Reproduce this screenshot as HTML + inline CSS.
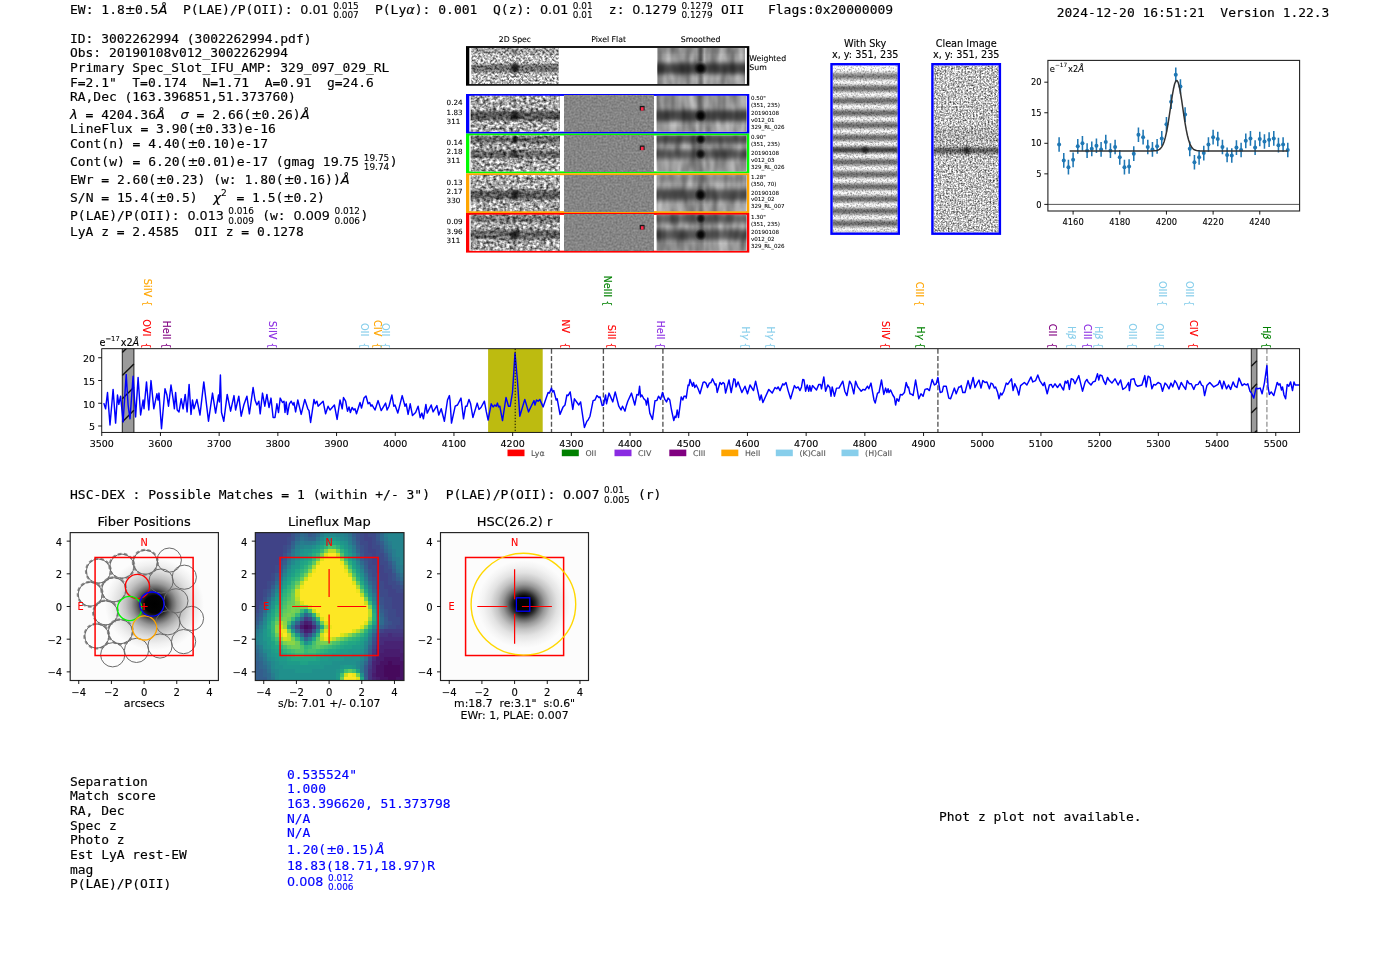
<!DOCTYPE html>
<html><head><meta charset="utf-8"><title>3002262994</title>
<style>
html,body{margin:0;padding:0;background:#fff;}
svg{display:block;will-change:transform;}
text{stroke-width:0.012em;}
.m{font-family:"DejaVu Sans Mono","Liberation Mono",monospace;}
.s{font-family:"DejaVu Sans","Liberation Sans",sans-serif;}
.i{font-family:"DejaVu Sans","Liberation Sans",sans-serif;font-style:italic;}
</style></head><body>
<svg width="1400" height="953" viewBox="0 0 1400 953">
<defs>
<filter id="n2d" x="0" y="0" width="100%" height="100%" color-interpolation-filters="sRGB">
<feTurbulence type="fractalNoise" baseFrequency="0.42 0.5" numOctaves="2" seed="7" result="t"/>
<feColorMatrix type="matrix" values="1.55 0 0 0 -0.04  1.55 0 0 0 -0.04  1.55 0 0 0 -0.04  0 0 0 0 1"/>
</filter>
<filter id="n2r" x="0" y="0" width="100%" height="100%" color-interpolation-filters="sRGB">
<feTurbulence type="fractalNoise" baseFrequency="0.3 0.36" numOctaves="2" seed="13"/>
<feColorMatrix type="matrix" values="1.5 0 0 0 -0.1  1.5 0 0 0 -0.1  1.5 0 0 0 -0.1  0 0 0 0 1"/>
</filter>
<filter id="nsm" x="0" y="0" width="100%" height="100%" color-interpolation-filters="sRGB">
<feTurbulence type="fractalNoise" baseFrequency="0.11 0.035" numOctaves="2" seed="11"/>
<feColorMatrix type="matrix" values="0.55 0 0 0 0.32  0.55 0 0 0 0.32  0.55 0 0 0 0.32  0 0 0 0 1"/>
</filter>
<filter id="nfl" x="0" y="0" width="100%" height="100%" color-interpolation-filters="sRGB">
<feTurbulence type="fractalNoise" baseFrequency="0.5" numOctaves="1" seed="5"/>
<feColorMatrix type="matrix" values="0.25 0 0 0 0.395  0.25 0 0 0 0.395  0.25 0 0 0 0.395  0 0 0 0 1"/>
</filter>
<filter id="b1" x="-20%" y="-20%" width="140%" height="140%"><feGaussianBlur stdDeviation="1.2"/></filter>
<filter id="b2" x="-30%" y="-30%" width="160%" height="160%"><feGaussianBlur stdDeviation="2"/></filter>
<radialGradient id="blob"><stop offset="0" stop-color="#000" stop-opacity="1"/><stop offset="0.4" stop-color="#000" stop-opacity="0.9"/><stop offset="0.7" stop-color="#000" stop-opacity="0.42"/><stop offset="1" stop-color="#000" stop-opacity="0"/></radialGradient>
<radialGradient id="blob2"><stop offset="0" stop-color="#000" stop-opacity="0.95"/><stop offset="0.45" stop-color="#000" stop-opacity="0.7"/><stop offset="1" stop-color="#000" stop-opacity="0"/></radialGradient>

<clipPath id="cc1"><rect x="471.40" y="47.90" width="87.20" height="36.20"/></clipPath>
<clipPath id="cc2"><rect x="657.40" y="47.90" width="87.60" height="36.20"/></clipPath>
<clipPath id="cc3"><rect x="470.70" y="95.80" width="89.30" height="36.00"/></clipPath>
<clipPath id="cc4"><rect x="656.60" y="95.80" width="89.90" height="36.00"/></clipPath>
<clipPath id="cc5"><rect x="470.70" y="135.40" width="89.30" height="36.10"/></clipPath>
<clipPath id="cc6"><rect x="656.60" y="135.40" width="89.90" height="36.10"/></clipPath>
<clipPath id="cc7"><rect x="470.70" y="175.10" width="89.30" height="36.10"/></clipPath>
<clipPath id="cc8"><rect x="656.60" y="175.10" width="89.90" height="36.10"/></clipPath>
<clipPath id="cc9"><rect x="470.70" y="214.80" width="89.30" height="36.00"/></clipPath>
<clipPath id="cc10"><rect x="656.60" y="214.80" width="89.90" height="36.00"/></clipPath>
<filter id="nsky" x="0" y="0" width="100%" height="100%" color-interpolation-filters="sRGB">
<feTurbulence type="fractalNoise" baseFrequency="0.55" numOctaves="2" seed="21"/>
<feColorMatrix type="matrix" values="1.0 0 0 0 0.44  1.0 0 0 0 0.44  1.0 0 0 0 0.44  0 0 0 0 1"/>
</filter>
<filter id="ncl" x="0" y="0" width="100%" height="100%" color-interpolation-filters="sRGB">
<feTurbulence type="fractalNoise" baseFrequency="0.6" numOctaves="2" seed="33"/>
<feColorMatrix type="matrix" values="1.5 0 0 0 0.0  1.5 0 0 0 0.0  1.5 0 0 0 0.0  0 0 0 0 1"/>
</filter>
<filter id="bs" x="-10%" y="-50%" width="120%" height="200%"><feGaussianBlur stdDeviation="1.5"/></filter>

<clipPath id="ck1"><rect x="832.70" y="65.40" width="64.90" height="167.10"/></clipPath>
<clipPath id="ck2"><rect x="933.60" y="65.40" width="65.10" height="167.10"/></clipPath>
<clipPath id="csp"><rect x="101.75" y="348.70" width="1197.85" height="83.70"/></clipPath>
<clipPath id="clab"><rect x="0" y="250" width="1400" height="98.3"/></clipPath>
<radialGradient id="gal" gradientUnits="userSpaceOnUse" cx="0" cy="0" r="46">
<stop offset="0" stop-color="#000"/><stop offset="0.19" stop-color="#030303"/><stop offset="0.27" stop-color="#2a2a2a"/>
<stop offset="0.36" stop-color="#666"/><stop offset="0.46" stop-color="#999"/><stop offset="0.58" stop-color="#c0c0c0"/>
<stop offset="0.72" stop-color="#dedede"/><stop offset="0.87" stop-color="#f1f1f1"/><stop offset="1" stop-color="#fcfcfc"/></radialGradient>
<clipPath id="cp1"><rect x="70.20" y="532.60" width="148.20" height="147.90"/></clipPath>
<radialGradient id="gal2" gradientUnits="userSpaceOnUse" cx="0" cy="0" r="44">
<stop offset="0" stop-color="#000"/><stop offset="0.18" stop-color="#030303"/><stop offset="0.26" stop-color="#2a2a2a"/>
<stop offset="0.35" stop-color="#666"/><stop offset="0.45" stop-color="#999"/><stop offset="0.57" stop-color="#c2c2c2"/>
<stop offset="0.72" stop-color="#e2e2e2"/><stop offset="0.87" stop-color="#f3f3f3"/><stop offset="1" stop-color="#fcfcfc"/></radialGradient>
<clipPath id="cp3"><rect x="440.50" y="532.60" width="148.00" height="147.90"/></clipPath>
</defs>
<rect width="1400" height="953" fill="#fff"/>
<text class="m" x="70.00" y="14.10" font-size="13.00" stroke="#000" xml:space="preserve">EW: 1.8</text>
<text class="s" x="124.79" y="14.10" font-size="13.00" stroke="#000" xml:space="preserve">±</text>
<text class="m" x="134.93" y="14.10" font-size="13.00" stroke="#000" xml:space="preserve">0.5</text>
<text class="i" x="158.41" y="14.10" font-size="13.00" stroke="#000" xml:space="preserve">Å</text>
<text class="m" x="167.30" y="14.10" font-size="13.00" stroke="#000" xml:space="preserve">  P(LAE)/P(OII): </text>
<text class="s" x="300.35" y="14.10" font-size="12.74" stroke="#000">0.01</text>
<text class="s" x="333.22" y="8.60" font-size="8.92" stroke="#000">0.015</text>
<text class="s" x="333.22" y="17.80" font-size="8.92" stroke="#000">0.007</text>
<text class="m" x="359.25" y="14.10" font-size="13.00" stroke="#000" xml:space="preserve">  P(Ly</text>
<text class="i" x="406.21" y="14.10" font-size="13.00" stroke="#000" xml:space="preserve">α</text>
<text class="m" x="414.78" y="14.10" font-size="13.00" stroke="#000" xml:space="preserve">): 0.001  Q(z): </text>
<text class="s" x="540.01" y="14.10" font-size="12.74" stroke="#000">0.01</text>
<text class="s" x="572.87" y="8.60" font-size="8.92" stroke="#000">0.01</text>
<text class="s" x="572.87" y="17.80" font-size="8.92" stroke="#000">0.01</text>
<text class="m" x="593.23" y="14.10" font-size="13.00" stroke="#000" xml:space="preserve">  z: </text>
<text class="s" x="632.36" y="14.10" font-size="12.74" stroke="#000">0.1279</text>
<text class="s" x="681.44" y="8.60" font-size="8.92" stroke="#000">0.1279</text>
<text class="s" x="681.44" y="17.80" font-size="8.92" stroke="#000">0.1279</text>
<text class="m" x="713.14" y="14.10" font-size="13.00" stroke="#000" xml:space="preserve"> OII   Flags:0x20000009</text>
<text class="m" x="1056.80" y="16.80" font-size="12.94" stroke="#000" xml:space="preserve">2024-12-20 16:51:21  Version 1.22.3</text>
<text class="m" x="70.00" y="42.70" font-size="12.94" stroke="#000" xml:space="preserve">ID: 3002262994 (3002262994.pdf)</text>
<text class="m" x="70.00" y="56.70" font-size="12.94" stroke="#000" xml:space="preserve">Obs: 20190108v012_3002262994</text>
<text class="m" x="70.00" y="71.80" font-size="12.94" stroke="#000" xml:space="preserve">Primary Spec_Slot_IFU_AMP: 329_097_029_RL</text>
<text class="m" x="70.00" y="86.60" font-size="12.94" stroke="#000" xml:space="preserve">F=2.1"  T=0.174  N=1.71  A=0.91  g=24.6</text>
<text class="m" x="70.00" y="101.20" font-size="12.94" stroke="#000" xml:space="preserve">RA,Dec (163.396851,51.373760)</text>
<text class="i" x="70.00" y="119.00" font-size="13.00" stroke="#000" xml:space="preserve">λ</text>
<text class="m" x="77.69" y="119.00" font-size="13.00" stroke="#000" xml:space="preserve"> = 4204.36</text>
<text class="i" x="155.96" y="119.00" font-size="13.00" stroke="#000" xml:space="preserve">Å</text>
<text class="m" x="164.85" y="119.00" font-size="13.00" stroke="#000" xml:space="preserve">  </text>
<text class="i" x="180.51" y="119.00" font-size="13.00" stroke="#000" xml:space="preserve">σ</text>
<text class="m" x="188.75" y="119.00" font-size="13.00" stroke="#000" xml:space="preserve"> = 2.66(</text>
<text class="s" x="251.36" y="119.00" font-size="13.00" stroke="#000" xml:space="preserve">±</text>
<text class="m" x="261.50" y="119.00" font-size="13.00" stroke="#000" xml:space="preserve">0.26)</text>
<text class="i" x="300.63" y="119.00" font-size="13.00" stroke="#000" xml:space="preserve">Å</text>
<text class="m" x="70.00" y="133.40" font-size="13.00" stroke="#000" xml:space="preserve">LineFlux = 3.90(</text>
<text class="s" x="195.23" y="133.40" font-size="13.00" stroke="#000" xml:space="preserve">±</text>
<text class="m" x="205.37" y="133.40" font-size="13.00" stroke="#000" xml:space="preserve">0.33)e-16</text>
<text class="m" x="70.00" y="148.40" font-size="13.00" stroke="#000" xml:space="preserve">Cont(n) = 4.40(</text>
<text class="s" x="187.40" y="148.40" font-size="13.00" stroke="#000" xml:space="preserve">±</text>
<text class="m" x="197.54" y="148.40" font-size="13.00" stroke="#000" xml:space="preserve">0.10)e-17</text>
<text class="m" x="70.00" y="166.20" font-size="13.00" stroke="#000" xml:space="preserve">Cont(w) = 6.20(</text>
<text class="s" x="187.40" y="166.20" font-size="13.00" stroke="#000" xml:space="preserve">±</text>
<text class="m" x="197.54" y="166.20" font-size="13.00" stroke="#000" xml:space="preserve">0.01)e-17 (gmag </text>
<text class="s" x="322.77" y="166.20" font-size="12.74" stroke="#000">19.75</text>
<text class="s" x="363.74" y="160.70" font-size="8.92" stroke="#000">19.75</text>
<text class="s" x="363.74" y="169.90" font-size="8.92" stroke="#000">19.74</text>
<text class="m" x="389.77" y="166.20" font-size="13.00" stroke="#000" xml:space="preserve">)</text>
<text class="m" x="70.00" y="184.40" font-size="13.00" stroke="#000" xml:space="preserve">EWr = 2.60(</text>
<text class="s" x="156.09" y="184.40" font-size="13.00" stroke="#000" xml:space="preserve">±</text>
<text class="m" x="166.24" y="184.40" font-size="13.00" stroke="#000" xml:space="preserve">0.23) (w: 1.80(</text>
<text class="s" x="283.63" y="184.40" font-size="13.00" stroke="#000" xml:space="preserve">±</text>
<text class="m" x="293.78" y="184.40" font-size="13.00" stroke="#000" xml:space="preserve">0.16))</text>
<text class="i" x="340.74" y="184.40" font-size="13.00" stroke="#000" xml:space="preserve">Å</text>
<text class="m" x="70.00" y="201.90" font-size="13.00" stroke="#000" xml:space="preserve">S/N = 15.4(</text>
<text class="s" x="156.09" y="201.90" font-size="13.00" stroke="#000" xml:space="preserve">±</text>
<text class="m" x="166.24" y="201.90" font-size="13.00" stroke="#000" xml:space="preserve">0.5)  </text>
<text class="i" x="213.19" y="201.90" font-size="13.00" stroke="#000" xml:space="preserve">χ</text>
<text class="s" x="220.89" y="196.20" font-size="9.10" stroke="#000">2</text>
<text class="m" x="228.58" y="201.90" font-size="13.00" stroke="#000" xml:space="preserve"> = 1.5(</text>
<text class="s" x="283.36" y="201.90" font-size="13.00" stroke="#000" xml:space="preserve">±</text>
<text class="m" x="293.51" y="201.90" font-size="13.00" stroke="#000" xml:space="preserve">0.2)</text>
<text class="m" x="70.00" y="219.90" font-size="13.00" stroke="#000" xml:space="preserve">P(LAE)/P(OII): </text>
<text class="s" x="187.40" y="219.90" font-size="12.74" stroke="#000">0.013</text>
<text class="s" x="228.37" y="214.40" font-size="8.92" stroke="#000">0.016</text>
<text class="s" x="228.37" y="223.60" font-size="8.92" stroke="#000">0.009</text>
<text class="m" x="254.40" y="219.90" font-size="13.00" stroke="#000" xml:space="preserve"> (w: </text>
<text class="s" x="293.53" y="219.90" font-size="12.74" stroke="#000">0.009</text>
<text class="s" x="334.51" y="214.40" font-size="8.92" stroke="#000">0.012</text>
<text class="s" x="334.51" y="223.60" font-size="8.92" stroke="#000">0.006</text>
<text class="m" x="360.54" y="219.90" font-size="13.00" stroke="#000" xml:space="preserve">)</text>
<text class="m" x="70.00" y="235.90" font-size="12.94" stroke="#000" xml:space="preserve">LyA z = 2.4585  OII z = 0.1278</text>
<text class="m" x="70.00" y="498.80" font-size="13.00" stroke="#000" xml:space="preserve">HSC-DEX : Possible Matches = 1 (within +/- 3")  P(LAE)/P(OII): </text>
<text class="s" x="563.08" y="498.80" font-size="12.74" stroke="#000">0.007</text>
<text class="s" x="604.05" y="493.30" font-size="8.92" stroke="#000">0.01</text>
<text class="s" x="604.05" y="502.50" font-size="8.92" stroke="#000">0.005</text>
<text class="m" x="630.08" y="498.80" font-size="13.00" stroke="#000" xml:space="preserve"> (r)</text>
<text class="m" x="70.00" y="785.50" font-size="12.94" stroke="#000">Separation</text>
<text class="m" x="70.00" y="800.30" font-size="12.94" stroke="#000">Match score</text>
<text class="m" x="70.00" y="814.90" font-size="12.94" stroke="#000">RA, Dec</text>
<text class="m" x="70.00" y="829.60" font-size="12.94" stroke="#000">Spec z</text>
<text class="m" x="70.00" y="844.30" font-size="12.94" stroke="#000">Photo z</text>
<text class="m" x="70.00" y="859.00" font-size="12.94" stroke="#000">Est LyA rest-EW</text>
<text class="m" x="70.00" y="873.80" font-size="12.94" stroke="#000">mag</text>
<text class="m" x="70.00" y="888.40" font-size="12.94" stroke="#000">P(LAE)/P(OII)</text>
<text class="m" x="287.00" y="778.60" font-size="12.94" fill="#0000ff" stroke="#0000ff">0.535524"</text>
<text class="m" x="287.00" y="793.20" font-size="12.94" fill="#0000ff" stroke="#0000ff">1.000</text>
<text class="m" x="287.00" y="807.90" font-size="12.94" fill="#0000ff" stroke="#0000ff">163.396620, 51.373798</text>
<text class="m" x="287.00" y="822.50" font-size="12.94" fill="#0000ff" stroke="#0000ff">N/A</text>
<text class="m" x="287.00" y="837.10" font-size="12.94" fill="#0000ff" stroke="#0000ff">N/A</text>
<text class="m" x="287.00" y="853.60" font-size="13.00" fill="#0000ff" stroke="#0000ff" xml:space="preserve">1.20(</text>
<text class="s" x="326.13" y="853.60" font-size="13.00" fill="#0000ff" stroke="#0000ff" xml:space="preserve">±</text>
<text class="m" x="336.28" y="853.60" font-size="13.00" fill="#0000ff" stroke="#0000ff" xml:space="preserve">0.15)</text>
<text class="i" x="375.41" y="853.60" font-size="13.00" fill="#0000ff" stroke="#0000ff" xml:space="preserve">Å</text>
<text class="m" x="287.00" y="869.50" font-size="12.94" fill="#0000ff" stroke="#0000ff">18.83(18.71,18.97)R</text>
<text class="s" x="287.00" y="886.00" font-size="12.74" fill="#0000ff" stroke="#0000ff">0.008</text>
<text class="s" x="327.97" y="880.50" font-size="8.92" fill="#0000ff" stroke="#0000ff">0.012</text>
<text class="s" x="327.97" y="889.70" font-size="8.92" fill="#0000ff" stroke="#0000ff">0.006</text>
<text class="m" x="939.00" y="821.10" font-size="12.94" stroke="#000">Phot z plot not available.</text>
<text class="s" x="515.00" y="41.60" font-size="7.78" stroke="#000" text-anchor="middle">2D Spec</text>
<text class="s" x="608.60" y="41.60" font-size="7.78" stroke="#000" text-anchor="middle">Pixel Flat</text>
<text class="s" x="700.70" y="41.60" font-size="7.78" stroke="#000" text-anchor="middle">Smoothed</text>
<text class="s" x="749.30" y="61.10" font-size="7.78" stroke="#000">Weighted</text>
<text class="s" x="749.30" y="69.80" font-size="7.78" stroke="#000">Sum</text>
<rect x="466" y="46.1" width="283.3" height="39.6" fill="#000"/>
<rect x="469.3" y="47.9" width="277.6" height="36.2" fill="#fff"/>
<g clip-path="url(#cc1)"><rect x="468.40" y="45.80" width="90.20" height="38.30" filter="url(#n2d)"/><rect x="466.40" y="64.30" width="97.20" height="8.00" fill="#000" opacity="0.42" filter="url(#b1)"/><rect x="466.40" y="48.50" width="97.20" height="5.00" fill="#000" opacity="0.18" filter="url(#b1)"/><ellipse cx="515.00" cy="68.00" rx="5.50" ry="7.15" fill="url(#blob2)" opacity="0.90"/><ellipse cx="515.00" cy="52.00" rx="3.50" ry="4.55" fill="url(#blob2)" opacity="0.40"/></g>
<g clip-path="url(#cc2)"><rect x="657.40" y="47.90" width="87.60" height="36.20" filter="url(#nsm)"/><rect x="649.40" y="63.00" width="103.60" height="11.00" fill="#000" opacity="0.62" filter="url(#b2)"/><rect x="649.40" y="47.50" width="103.60" height="5.00" fill="#000" opacity="0.10" filter="url(#b2)"/><rect x="698.45" y="46.00" width="4.5" height="16.00" fill="#000" opacity="0.50" filter="url(#b1)"/><rect x="698.45" y="74.00" width="4.5" height="12.00" fill="#000" opacity="0.30" filter="url(#b1)"/><ellipse cx="700.70" cy="68.30" rx="6.66" ry="6.80" fill="url(#blob)" opacity="1.00"/></g>
<rect x="466" y="94.00" width="283.3" height="39.60" fill="#0000ff"/>
<rect x="469.3" y="95.90" width="277.6" height="35.80" fill="#fff"/>
<g clip-path="url(#cc3)"><rect x="465.70" y="92.30" width="94.30" height="39.50" filter="url(#n2r)"/><rect x="465.70" y="111.20" width="99.30" height="9.00" fill="#000" opacity="0.50" filter="url(#b1)"/><ellipse cx="515.00" cy="115.70" rx="5.00" ry="6.50" fill="url(#blob2)" opacity="0.90"/></g>
<rect x="564.3" y="95.80" width="89.5" height="36.00" filter="url(#nfl)"/>
<rect x="639.7" y="105.90" width="4.9" height="4.6" fill="#1a1a1a"/>
<rect x="640.9" y="107.20" width="2.7" height="3.4" fill="#ff2a4a"/>
<g clip-path="url(#cc4)"><rect x="652.60" y="93.80" width="93.90" height="38.00" filter="url(#nsm)"/><rect x="648.60" y="110.20" width="105.90" height="11.00" fill="#000" opacity="0.60" filter="url(#b2)"/><rect x="698.45" y="94.00" width="4.5" height="39.60" fill="#000" opacity="0.22" filter="url(#b1)"/><ellipse cx="700.70" cy="115.70" rx="6.17" ry="6.30" fill="url(#blob)" opacity="1.00"/></g>
<text class="s" x="446.60" y="105.30" font-size="7.20" stroke="#000">0.24</text>
<text class="s" x="446.60" y="114.50" font-size="7.20" stroke="#000">1.83</text>
<text class="s" x="446.60" y="123.70" font-size="7.20" stroke="#000">311</text>
<text class="s" x="750.90" y="99.70" font-size="5.56" stroke="#000">0.50"</text>
<text class="s" x="750.90" y="106.50" font-size="5.56" stroke="#000">(351, 235)</text>
<text class="s" x="750.90" y="115.30" font-size="5.56" stroke="#000">20190108</text>
<text class="s" x="750.90" y="122.10" font-size="5.56" stroke="#000">v012_01</text>
<text class="s" x="750.90" y="129.00" font-size="5.56" stroke="#000">329_RL_026</text>
<rect x="466" y="133.60" width="283.3" height="39.70" fill="#00fa00"/>
<rect x="469.3" y="135.50" width="277.6" height="35.90" fill="#fff"/>
<g clip-path="url(#cc5)"><rect x="458.70" y="127.00" width="101.30" height="44.50" filter="url(#n2r)"/><rect x="465.70" y="136.10" width="99.30" height="7.00" fill="#000" opacity="0.40" filter="url(#b1)"/><rect x="465.70" y="150.10" width="99.30" height="8.00" fill="#000" opacity="0.40" filter="url(#b1)"/><ellipse cx="515.00" cy="139.60" rx="4.00" ry="5.20" fill="url(#blob2)" opacity="0.90"/><ellipse cx="515.00" cy="154.10" rx="4.00" ry="5.20" fill="url(#blob2)" opacity="0.70"/></g>
<rect x="564.3" y="135.40" width="89.5" height="36.10" filter="url(#nfl)"/>
<rect x="639.7" y="145.50" width="4.9" height="4.6" fill="#1a1a1a"/>
<rect x="640.9" y="146.80" width="2.7" height="3.4" fill="#ff2a4a"/>
<g clip-path="url(#cc6)"><rect x="643.60" y="128.90" width="102.90" height="42.60" filter="url(#nsm)"/><rect x="648.60" y="134.60" width="105.90" height="9.00" fill="#000" opacity="0.50" filter="url(#b2)"/><rect x="648.60" y="149.60" width="105.90" height="9.00" fill="#000" opacity="0.45" filter="url(#b2)"/><rect x="698.45" y="133.60" width="4.5" height="39.70" fill="#000" opacity="0.22" filter="url(#b1)"/><ellipse cx="700.70" cy="139.10" rx="5.39" ry="5.50" fill="url(#blob)" opacity="0.95"/><ellipse cx="700.70" cy="154.10" rx="5.39" ry="5.50" fill="url(#blob)" opacity="0.85"/></g>
<text class="s" x="446.60" y="144.90" font-size="7.20" stroke="#000">0.14</text>
<text class="s" x="446.60" y="154.10" font-size="7.20" stroke="#000">2.18</text>
<text class="s" x="446.60" y="163.30" font-size="7.20" stroke="#000">311</text>
<text class="s" x="750.90" y="139.30" font-size="5.56" stroke="#000">0.90"</text>
<text class="s" x="750.90" y="146.10" font-size="5.56" stroke="#000">(351, 235)</text>
<text class="s" x="750.90" y="154.90" font-size="5.56" stroke="#000">20190108</text>
<text class="s" x="750.90" y="161.70" font-size="5.56" stroke="#000">v012_03</text>
<text class="s" x="750.90" y="168.60" font-size="5.56" stroke="#000">329_RL_026</text>
<rect x="466" y="173.30" width="283.3" height="39.70" fill="#ffa500"/>
<rect x="469.3" y="175.20" width="277.6" height="35.90" fill="#fff"/>
<g clip-path="url(#cc7)"><rect x="451.70" y="161.80" width="108.30" height="49.40" filter="url(#n2r)"/><rect x="465.70" y="190.40" width="99.30" height="9.00" fill="#000" opacity="0.48" filter="url(#b1)"/><ellipse cx="515.00" cy="194.90" rx="5.00" ry="6.50" fill="url(#blob2)" opacity="0.90"/></g>
<rect x="564.3" y="175.10" width="89.5" height="36.10" filter="url(#nfl)"/>
<g clip-path="url(#cc8)"><rect x="634.60" y="164.10" width="111.90" height="47.10" filter="url(#nsm)"/><rect x="648.60" y="189.40" width="105.90" height="11.00" fill="#000" opacity="0.50" filter="url(#b2)"/><rect x="648.60" y="175.80" width="105.90" height="5.00" fill="#000" opacity="0.20" filter="url(#b2)"/><rect x="698.45" y="173.30" width="4.5" height="39.70" fill="#000" opacity="0.22" filter="url(#b1)"/><ellipse cx="700.70" cy="194.90" rx="6.17" ry="6.30" fill="url(#blob)" opacity="0.95"/></g>
<text class="s" x="446.60" y="184.60" font-size="7.20" stroke="#000">0.13</text>
<text class="s" x="446.60" y="193.80" font-size="7.20" stroke="#000">2.17</text>
<text class="s" x="446.60" y="203.00" font-size="7.20" stroke="#000">330</text>
<text class="s" x="750.90" y="179.00" font-size="5.56" stroke="#000">1.28"</text>
<text class="s" x="750.90" y="185.80" font-size="5.56" stroke="#000">(350, 70)</text>
<text class="s" x="750.90" y="194.60" font-size="5.56" stroke="#000">20190108</text>
<text class="s" x="750.90" y="201.40" font-size="5.56" stroke="#000">v012_02</text>
<text class="s" x="750.90" y="208.30" font-size="5.56" stroke="#000">329_RL_007</text>
<rect x="466" y="213.00" width="283.3" height="39.60" fill="#ff0000"/>
<rect x="469.3" y="214.90" width="277.6" height="35.80" fill="#fff"/>
<g clip-path="url(#cc9)"><rect x="444.70" y="196.60" width="115.30" height="54.20" filter="url(#n2r)"/><rect x="465.70" y="215.50" width="99.30" height="7.00" fill="#000" opacity="0.30" filter="url(#b1)"/><rect x="465.70" y="230.20" width="99.30" height="9.00" fill="#000" opacity="0.42" filter="url(#b1)"/><ellipse cx="515.00" cy="234.70" rx="6.00" ry="7.80" fill="url(#blob2)" opacity="0.80"/></g>
<rect x="564.3" y="214.80" width="89.5" height="36.00" filter="url(#nfl)"/>
<rect x="639.7" y="224.90" width="4.9" height="4.6" fill="#1a1a1a"/>
<rect x="640.9" y="226.20" width="2.7" height="3.4" fill="#ff2a4a"/>
<g clip-path="url(#cc10)"><rect x="625.60" y="199.30" width="120.90" height="51.50" filter="url(#nsm)"/><rect x="648.60" y="214.00" width="105.90" height="9.00" fill="#000" opacity="0.45" filter="url(#b2)"/><rect x="648.60" y="229.70" width="105.90" height="10.00" fill="#000" opacity="0.50" filter="url(#b2)"/><rect x="698.45" y="213.00" width="4.5" height="39.60" fill="#000" opacity="0.22" filter="url(#b1)"/><ellipse cx="700.70" cy="218.50" rx="4.90" ry="5.00" fill="url(#blob)" opacity="0.75"/><ellipse cx="700.70" cy="234.70" rx="5.88" ry="6.00" fill="url(#blob)" opacity="0.95"/></g>
<text class="s" x="446.60" y="224.30" font-size="7.20" stroke="#000">0.09</text>
<text class="s" x="446.60" y="233.50" font-size="7.20" stroke="#000">3.96</text>
<text class="s" x="446.60" y="242.70" font-size="7.20" stroke="#000">311</text>
<text class="s" x="750.90" y="218.70" font-size="5.56" stroke="#000">1.30"</text>
<text class="s" x="750.90" y="225.50" font-size="5.56" stroke="#000">(351, 235)</text>
<text class="s" x="750.90" y="234.30" font-size="5.56" stroke="#000">20190108</text>
<text class="s" x="750.90" y="241.10" font-size="5.56" stroke="#000">v012_02</text>
<text class="s" x="750.90" y="248.00" font-size="5.56" stroke="#000">329_RL_026</text>
<text class="s" x="865.20" y="47.30" font-size="9.72" stroke="#000" text-anchor="middle">With Sky</text>
<text class="s" x="865.20" y="58.30" font-size="9.72" stroke="#000" text-anchor="middle">x, y: 351, 235</text>
<text class="s" x="966.20" y="47.30" font-size="9.72" stroke="#000" text-anchor="middle">Clean Image</text>
<text class="s" x="966.20" y="58.30" font-size="9.72" stroke="#000" text-anchor="middle">x, y: 351, 235</text>
<g clip-path="url(#ck1)"><rect x="830.30" y="63.00" width="69.70" height="171.90" filter="url(#nsky)"/><rect x="825.30" y="73.10" width="79.70" height="6.2" fill="#000" opacity="0.48" filter="url(#bs)"/><rect x="825.30" y="85.37" width="79.70" height="6.2" fill="#000" opacity="0.56" filter="url(#bs)"/><rect x="825.30" y="97.64" width="79.70" height="6.2" fill="#000" opacity="0.56" filter="url(#bs)"/><rect x="825.30" y="109.91" width="79.70" height="6.2" fill="#000" opacity="0.56" filter="url(#bs)"/><rect x="825.30" y="122.18" width="79.70" height="6.2" fill="#000" opacity="0.56" filter="url(#bs)"/><rect x="825.30" y="134.45" width="79.70" height="6.2" fill="#000" opacity="0.56" filter="url(#bs)"/><rect x="825.30" y="146.72" width="79.70" height="6.2" fill="#000" opacity="0.74" filter="url(#bs)"/><rect x="825.30" y="158.99" width="79.70" height="6.2" fill="#000" opacity="0.56" filter="url(#bs)"/><rect x="825.30" y="171.26" width="79.70" height="6.2" fill="#000" opacity="0.56" filter="url(#bs)"/><rect x="825.30" y="183.53" width="79.70" height="6.2" fill="#000" opacity="0.56" filter="url(#bs)"/><rect x="825.30" y="195.80" width="79.70" height="6.2" fill="#000" opacity="0.56" filter="url(#bs)"/><rect x="825.30" y="208.07" width="79.70" height="6.2" fill="#000" opacity="0.56" filter="url(#bs)"/><rect x="825.30" y="220.34" width="79.70" height="6.2" fill="#000" opacity="0.56" filter="url(#bs)"/><rect x="825.30" y="232.61" width="79.70" height="6.2" fill="#000" opacity="0.56" filter="url(#bs)"/><ellipse cx="865" cy="150" rx="3" ry="3.5" fill="#000" opacity="0.6" filter="url(#bs)"/></g>
<rect x="831.50" y="64.20" width="67.30" height="169.50" fill="none" stroke="#0000ff" stroke-width="2.40"/>
<g clip-path="url(#ck2)"><rect x="931.20" y="63.00" width="69.90" height="171.90" filter="url(#ncl)"/><rect x="926.20" y="147.5" width="79.90" height="6" fill="#000" opacity="0.55" filter="url(#bs)"/><rect x="926.20" y="128" width="79.90" height="14" fill="#000" opacity="0.08" filter="url(#bs)"/><ellipse cx="966.5" cy="150" rx="3" ry="3.5" fill="#000" opacity="0.7" filter="url(#bs)"/></g>
<rect x="932.40" y="64.20" width="67.50" height="169.50" fill="none" stroke="#0000ff" stroke-width="2.40"/>
<line x1="1047.90" y1="204.40" x2="1299.60" y2="204.40" stroke="#444" stroke-width="0.9"/>
<path d="M1059.10 137.19V151.85M1063.77 153.08V167.74M1068.43 159.80V174.46M1073.10 152.47V167.13M1077.77 139.02V153.69M1082.43 135.97V150.63M1087.10 143.30V157.96M1091.77 141.47V156.13M1096.43 138.41V153.08M1101.10 142.08V156.74M1105.77 134.75V149.41M1110.44 143.30V157.96M1115.10 139.63V154.30M1119.77 150.02V164.69M1124.44 159.80V174.46M1129.10 159.19V173.85M1133.77 146.36V161.02M1138.44 127.41V142.08M1143.11 129.86V144.52M1147.77 139.63V154.30M1152.44 142.08V156.74M1157.11 139.02V153.69M1161.77 131.08V145.74M1166.44 117.03V131.69M1171.11 94.42V109.08M1175.77 67.54V82.20M1180.44 79.14V93.81M1185.11 107.25V121.92M1189.77 141.47V156.13M1194.44 154.91V169.57M1199.11 150.02V164.69M1203.78 145.74V160.41M1208.44 137.19V151.85M1213.11 129.86V144.52M1217.78 131.69V146.36M1222.44 139.63V154.30M1227.11 147.58V162.24M1231.78 148.19V162.85M1236.44 140.25V154.91M1241.11 142.69V157.35M1245.78 133.52V148.19M1250.45 131.08V145.74M1255.11 140.25V154.91M1259.78 131.69V146.36M1264.45 134.13V148.80M1269.11 132.30V146.97M1273.78 131.08V145.74M1278.45 137.80V152.47M1283.11 137.19V151.85M1287.78 142.69V157.35" stroke="#1f77b4" stroke-width="1.55" fill="none"/>
<g fill="#1f77b4"><circle cx="1059.10" cy="144.52" r="2.0"/><circle cx="1063.77" cy="160.41" r="2.0"/><circle cx="1068.43" cy="167.13" r="2.0"/><circle cx="1073.10" cy="159.80" r="2.0"/><circle cx="1077.77" cy="146.36" r="2.0"/><circle cx="1082.43" cy="143.30" r="2.0"/><circle cx="1087.10" cy="150.63" r="2.0"/><circle cx="1091.77" cy="148.80" r="2.0"/><circle cx="1096.43" cy="145.74" r="2.0"/><circle cx="1101.10" cy="149.41" r="2.0"/><circle cx="1105.77" cy="142.08" r="2.0"/><circle cx="1110.44" cy="150.63" r="2.0"/><circle cx="1115.10" cy="146.97" r="2.0"/><circle cx="1119.77" cy="157.35" r="2.0"/><circle cx="1124.44" cy="167.13" r="2.0"/><circle cx="1129.10" cy="166.52" r="2.0"/><circle cx="1133.77" cy="153.69" r="2.0"/><circle cx="1138.44" cy="134.75" r="2.0"/><circle cx="1143.11" cy="137.19" r="2.0"/><circle cx="1147.77" cy="146.97" r="2.0"/><circle cx="1152.44" cy="149.41" r="2.0"/><circle cx="1157.11" cy="146.36" r="2.0"/><circle cx="1161.77" cy="138.41" r="2.0"/><circle cx="1166.44" cy="124.36" r="2.0"/><circle cx="1171.11" cy="101.75" r="2.0"/><circle cx="1175.77" cy="74.87" r="2.0"/><circle cx="1180.44" cy="86.48" r="2.0"/><circle cx="1185.11" cy="114.58" r="2.0"/><circle cx="1189.77" cy="148.80" r="2.0"/><circle cx="1194.44" cy="162.24" r="2.0"/><circle cx="1199.11" cy="157.35" r="2.0"/><circle cx="1203.78" cy="153.08" r="2.0"/><circle cx="1208.44" cy="144.52" r="2.0"/><circle cx="1213.11" cy="137.19" r="2.0"/><circle cx="1217.78" cy="139.02" r="2.0"/><circle cx="1222.44" cy="146.97" r="2.0"/><circle cx="1227.11" cy="154.91" r="2.0"/><circle cx="1231.78" cy="155.52" r="2.0"/><circle cx="1236.44" cy="147.58" r="2.0"/><circle cx="1241.11" cy="150.02" r="2.0"/><circle cx="1245.78" cy="140.86" r="2.0"/><circle cx="1250.45" cy="138.41" r="2.0"/><circle cx="1255.11" cy="147.58" r="2.0"/><circle cx="1259.78" cy="139.02" r="2.0"/><circle cx="1264.45" cy="141.47" r="2.0"/><circle cx="1269.11" cy="139.63" r="2.0"/><circle cx="1273.78" cy="138.41" r="2.0"/><circle cx="1278.45" cy="145.13" r="2.0"/><circle cx="1283.11" cy="144.52" r="2.0"/><circle cx="1287.78" cy="150.02" r="2.0"/></g>
<polyline points="1069.60,150.94 1070.77,150.94 1071.93,150.94 1073.10,150.94 1074.27,150.94 1075.43,150.94 1076.60,150.94 1077.77,150.94 1078.93,150.94 1080.10,150.94 1081.27,150.94 1082.43,150.94 1083.60,150.94 1084.77,150.94 1085.93,150.94 1087.10,150.94 1088.27,150.94 1089.43,150.94 1090.60,150.94 1091.77,150.94 1092.93,150.94 1094.10,150.94 1095.27,150.94 1096.43,150.94 1097.60,150.94 1098.77,150.94 1099.94,150.94 1101.10,150.94 1102.27,150.94 1103.44,150.94 1104.60,150.94 1105.77,150.94 1106.94,150.94 1108.10,150.94 1109.27,150.94 1110.44,150.94 1111.60,150.94 1112.77,150.94 1113.94,150.94 1115.10,150.94 1116.27,150.94 1117.44,150.94 1118.60,150.94 1119.77,150.94 1120.94,150.94 1122.10,150.94 1123.27,150.94 1124.44,150.94 1125.60,150.94 1126.77,150.94 1127.94,150.94 1129.10,150.94 1130.27,150.94 1131.44,150.94 1132.60,150.94 1133.77,150.94 1134.94,150.94 1136.10,150.94 1137.27,150.94 1138.44,150.94 1139.60,150.94 1140.77,150.94 1141.94,150.94 1143.11,150.94 1144.27,150.94 1145.44,150.94 1146.61,150.94 1147.77,150.94 1148.94,150.93 1150.11,150.93 1151.27,150.92 1152.44,150.90 1153.61,150.86 1154.77,150.79 1155.94,150.66 1157.11,150.43 1158.27,150.04 1159.44,149.40 1160.61,148.40 1161.77,146.89 1162.94,144.70 1164.11,141.67 1165.27,137.64 1166.44,132.52 1167.61,126.31 1168.77,119.16 1169.94,111.35 1171.11,103.33 1172.27,95.67 1173.44,89.01 1174.61,83.96 1175.77,81.01 1176.94,80.46 1178.11,82.38 1179.27,86.56 1180.44,92.58 1181.61,99.88 1182.77,107.81 1183.94,115.78 1185.11,123.27 1186.27,129.92 1187.44,135.52 1188.61,140.03 1189.77,143.48 1190.94,146.02 1192.11,147.81 1193.28,149.01 1194.44,149.80 1195.61,150.28 1196.78,150.58 1197.94,150.74 1199.11,150.84 1200.28,150.89 1201.44,150.91 1202.61,150.93 1203.78,150.93 1204.94,150.94 1206.11,150.94 1207.28,150.94 1208.44,150.94 1209.61,150.94 1210.78,150.94 1211.94,150.94 1213.11,150.94 1214.28,150.94 1215.44,150.94 1216.61,150.94 1217.78,150.94 1218.94,150.94 1220.11,150.94 1221.28,150.94 1222.44,150.94 1223.61,150.94 1224.78,150.94 1225.94,150.94 1227.11,150.94 1228.28,150.94 1229.44,150.94 1230.61,150.94 1231.78,150.94 1232.94,150.94 1234.11,150.94 1235.28,150.94 1236.44,150.94 1237.61,150.94 1238.78,150.94 1239.95,150.94 1241.11,150.94 1242.28,150.94 1243.45,150.94 1244.61,150.94 1245.78,150.94 1246.95,150.94 1248.11,150.94 1249.28,150.94 1250.45,150.94 1251.61,150.94 1252.78,150.94 1253.95,150.94 1255.11,150.94 1256.28,150.94 1257.45,150.94 1258.61,150.94 1259.78,150.94 1260.95,150.94 1262.11,150.94 1263.28,150.94 1264.45,150.94 1265.61,150.94 1266.78,150.94 1267.95,150.94 1269.11,150.94 1270.28,150.94 1271.45,150.94 1272.61,150.94 1273.78,150.94 1274.95,150.94 1276.11,150.94 1277.28,150.94 1278.45,150.94 1279.61,150.94 1280.78,150.94 1281.95,150.94 1283.11,150.94 1284.28,150.94 1285.45,150.94 1286.62,150.94 1287.78,150.94" fill="none" stroke="#333" stroke-width="1.5" stroke-linejoin="round"/>
<rect x="1047.90" y="60.40" width="251.70" height="150.60" fill="none" stroke="#222" stroke-width="1.1"/>
<text class="s" x="1073.10" y="224.60" font-size="8.33" stroke="#000" text-anchor="middle">4160</text>
<text class="s" x="1119.77" y="224.60" font-size="8.33" stroke="#000" text-anchor="middle">4180</text>
<text class="s" x="1166.44" y="224.60" font-size="8.33" stroke="#000" text-anchor="middle">4200</text>
<text class="s" x="1213.11" y="224.60" font-size="8.33" stroke="#000" text-anchor="middle">4220</text>
<text class="s" x="1259.78" y="224.60" font-size="8.33" stroke="#000" text-anchor="middle">4240</text>
<text class="s" x="1041.60" y="207.50" font-size="8.33" stroke="#000" text-anchor="end">0</text>
<text class="s" x="1041.60" y="176.95" font-size="8.33" stroke="#000" text-anchor="end">5</text>
<text class="s" x="1041.60" y="146.40" font-size="8.33" stroke="#000" text-anchor="end">10</text>
<text class="s" x="1041.60" y="115.85" font-size="8.33" stroke="#000" text-anchor="end">15</text>
<text class="s" x="1041.60" y="85.30" font-size="8.33" stroke="#000" text-anchor="end">20</text>
<path d="M1073.10 211.00v3.6M1119.77 211.00v3.6M1166.44 211.00v3.6M1213.11 211.00v3.6M1259.78 211.00v3.6M1047.90 204.40h-3.6M1047.90 173.85h-3.6M1047.90 143.30h-3.6M1047.90 112.75h-3.6M1047.90 82.20h-3.6" stroke="#000" stroke-width="0.9" fill="none"/>
<text class="s" x="1049.80" y="71.60" font-size="8.33" stroke="#000" xml:space="preserve">e</text>
<text class="s" x="1054.92" y="67.24" font-size="5.83" stroke="#000">−17</text>
<text class="s" x="1068.09" y="71.60" font-size="8.33" stroke="#000" xml:space="preserve">x2</text>
<text class="i" x="1078.32" y="71.60" font-size="8.33" stroke="#000" xml:space="preserve">Å</text>
<g clip-path="url(#csp)"><rect x="488.1" y="348.70" width="54.6" height="83.70" fill="#bdbb10"/><rect x="122.30" y="346.70" width="11.60" height="87.70" fill="#9b9b9b" stroke="#222" stroke-width="1.0"/><line x1="122.30" y1="352.50" x2="133.90" y2="340.90" stroke="#111" stroke-width="1.4"/><line x1="122.30" y1="375.60" x2="133.90" y2="364.00" stroke="#111" stroke-width="1.4"/><line x1="122.30" y1="398.75" x2="133.90" y2="387.15" stroke="#111" stroke-width="1.4"/><line x1="122.30" y1="421.90" x2="133.90" y2="410.30" stroke="#111" stroke-width="1.4"/><line x1="122.30" y1="445.00" x2="133.90" y2="433.40" stroke="#111" stroke-width="1.4"/><rect x="1251.30" y="346.70" width="5.60" height="87.70" fill="#9b9b9b" stroke="#222" stroke-width="1.0"/><line x1="1251.30" y1="343.20" x2="1256.90" y2="337.60" stroke="#111" stroke-width="1.4"/><line x1="1251.30" y1="366.25" x2="1256.90" y2="360.65" stroke="#111" stroke-width="1.4"/><line x1="1251.30" y1="389.40" x2="1256.90" y2="383.80" stroke="#111" stroke-width="1.4"/><line x1="1251.30" y1="413.10" x2="1256.90" y2="407.50" stroke="#111" stroke-width="1.4"/><line x1="1251.30" y1="436.00" x2="1256.90" y2="430.40" stroke="#111" stroke-width="1.4"/><line x1="551.50" y1="348.70" x2="551.50" y2="432.40" stroke="#555" stroke-width="1.35" stroke-dasharray="5.1 2.2"/><line x1="603.40" y1="348.70" x2="603.40" y2="432.40" stroke="#555" stroke-width="1.35" stroke-dasharray="5.1 2.2"/><line x1="662.90" y1="348.70" x2="662.90" y2="432.40" stroke="#555" stroke-width="1.35" stroke-dasharray="5.1 2.2"/><line x1="937.90" y1="348.70" x2="937.90" y2="432.40" stroke="#555" stroke-width="1.35" stroke-dasharray="5.1 2.2"/><line x1="1266.9" y1="348.70" x2="1266.9" y2="432.40" stroke="#999" stroke-width="1.35" stroke-dasharray="5.1 2.2"/><polyline points="103.8,403.1 105.6,408.8 107.5,392.5 110.0,425.0 113.1,389.4 115.6,423.1 117.5,395.0 118.8,404.4 120.6,396.2 123.1,421.9 126.2,374.4 128.1,405.0 130.0,418.8 133.1,376.2 135.6,416.9 138.1,377.5 140.6,415.0 143.1,400.0 144.0,408.8 146.5,381.9 148.8,410.0 151.0,380.6 153.8,408.8 156.9,393.8 158.1,400.0 159.0,393.1 161.5,428.8 165.0,388.8 166.9,395.0 168.5,406.2 171.0,385.0 173.1,398.8 174.4,408.8 175.6,392.5 177.2,410.0 179.0,411.9 181.2,398.8 183.1,408.8 185.2,394.4 187.1,411.9 189.1,384.4 191.0,414.4 192.5,400.0 194.0,408.8 196.9,399.4 200.0,415.0 203.8,381.9 208.5,421.2 212.5,393.1 215.6,413.1 218.5,395.0 219.4,401.9 220.4,375.0 221.5,412.5 223.8,421.2 227.2,394.4 230.6,411.2 234.0,395.6 235.6,410.0 238.8,396.2 241.2,416.2 243.8,405.0 246.9,396.2 249.4,413.8 253.1,387.5 255.0,400.0 256.9,405.0 258.8,401.2 260.2,413.8 262.5,393.1 264.8,406.2 266.9,394.4 269.0,407.5 271.0,398.1 273.1,417.5 275.0,417.5 276.9,403.8 278.5,412.5 280.2,398.1 282.5,402.5 284.0,401.2 285.0,412.5 286.2,401.9 287.5,414.4 289.4,403.8 291.2,401.2 293.1,405.0 294.0,402.5 295.6,411.9 297.8,400.0 301.2,414.4 304.8,399.4 307.8,408.8 309.0,410.6 310.6,422.5 314.0,399.4 315.2,403.8 316.9,401.2 318.1,406.2 323.1,401.2 325.6,413.8 328.1,406.2 330.0,410.0 334.4,405.0 337.1,419.4 340.0,400.0 342.2,408.8 343.5,397.5 345.6,401.2 347.5,411.2 349.0,406.9 350.4,412.5 352.1,407.5 353.8,410.0 355.0,408.8 356.5,413.8 360.0,402.5 361.5,408.1 364.0,398.1 366.0,396.0 368.1,403.8 369.6,402.5 371.0,406.2 372.0,404.8 375.0,410.0 378.1,400.6 381.2,410.6 385.6,403.1 387.1,410.0 389.0,406.2 391.9,395.0 393.8,406.2 395.0,405.0 397.8,413.1 402.2,395.6 405.0,406.2 406.2,403.8 408.1,414.4 410.2,403.8 412.5,415.6 415.6,412.5 418.1,406.2 420.2,417.5 421.9,413.1 423.4,418.8 425.9,404.4 427.2,413.1 431.2,405.0 433.1,411.9 436.9,405.6 438.8,415.0 441.2,408.8 444.4,421.2 447.5,400.0 449.4,395.6 450.0,400.0 451.5,423.1 455.2,406.2 457.5,405.0 461.0,398.1 463.5,418.8 465.6,406.2 466.9,406.2 469.0,399.4 470.6,403.8 472.9,417.5 477.2,403.1 479.0,409.4 481.0,407.5 484.4,401.2 486.2,411.2 488.1,420.0 491.2,403.8 493.1,406.9 494.8,405.0 496.2,406.2 497.5,403.1 498.5,406.9 499.8,406.2 502.5,420.6 506.0,397.5 508.5,406.2 510.2,406.2 512.5,392.5 515.0,353.1 517.5,381.2 519.8,416.2 524.8,399.4 528.5,411.9 531.2,406.2 534.0,400.6 535.0,405.0 536.5,400.0 538.1,401.2 539.8,399.4 543.1,406.9 548.1,392.5 549.4,393.1 551.5,388.1 552.5,391.9 553.8,390.6 556.2,400.0 557.2,398.8 560.0,414.4 563.1,406.9 565.0,405.0 566.9,395.0 568.1,395.6 570.2,391.9 572.8,409.4 574.4,398.8 578.8,405.0 580.6,401.9 584.4,427.5 586.9,421.2 588.1,420.0 590.0,416.2 593.1,400.6 595.0,400.0 596.9,395.6 598.8,397.5 600.0,396.9 602.2,405.6 603.5,405.0 605.6,395.0 606.5,403.8 609.0,393.1 612.8,401.9 615.2,391.9 618.8,406.2 621.0,410.0 622.5,406.2 625.0,411.2 626.2,406.2 627.8,401.2 631.5,393.1 634.8,405.0 636.9,394.4 638.5,395.0 639.6,386.2 640.6,396.9 641.9,395.0 643.8,398.8 645.6,400.6 646.5,405.0 647.8,398.1 649.8,413.1 652.5,419.4 655.0,400.6 656.9,400.6 658.5,396.2 660.6,399.4 662.5,392.5 664.8,399.4 666.5,401.9 668.1,398.1 669.8,400.0 671.5,410.0 673.8,420.6 675.0,416.2 676.0,417.5 677.2,410.0 678.5,417.5 681.2,396.9 682.8,400.0 684.0,396.2 686.0,396.2 686.2,398.1 688.1,385.0 689.0,385.6 690.0,379.4 692.5,386.2 693.5,382.5 694.8,387.5 696.2,385.0 698.1,388.8 700.0,393.8 703.1,382.5 704.4,381.9 706.0,383.1 707.5,387.5 709.4,383.1 711.0,382.5 712.5,378.8 715.2,385.0 716.0,383.8 717.2,392.5 720.0,382.5 721.5,384.4 723.1,382.5 724.4,383.8 725.6,393.1 729.0,380.0 731.2,392.5 733.8,378.8 735.0,379.4 736.0,386.9 738.1,381.9 741.9,392.5 745.0,386.2 747.5,393.8 750.0,385.0 753.5,390.6 755.6,381.2 759.8,400.0 761.2,395.0 762.9,402.5 768.8,389.4 772.2,393.1 775.0,387.5 776.9,388.8 778.1,386.9 780.0,390.6 782.8,383.8 784.0,385.0 786.0,382.5 788.1,390.6 790.6,398.8 794.4,385.6 796.2,388.1 798.1,386.9 800.0,390.6 801.5,386.9 802.8,379.4 804.0,380.0 805.6,391.2 807.2,385.0 808.8,391.2 809.8,385.6 811.0,391.2 812.5,385.6 813.8,386.9 816.5,390.0 818.8,384.4 820.6,384.4 821.5,388.8 823.8,376.9 825.6,391.2 827.8,385.0 829.8,387.5 831.0,396.2 832.2,386.9 834.4,396.2 836.5,388.1 839.0,388.1 842.8,381.2 844.8,391.2 846.9,395.6 849.6,381.2 851.5,384.4 853.8,393.8 855.6,381.2 857.8,386.9 861.2,391.2 863.1,389.4 865.0,390.0 867.5,386.2 868.8,388.8 871.0,383.1 874.0,400.0 875.2,403.1 877.5,393.1 879.0,392.5 881.5,380.0 883.8,394.4 885.6,388.1 886.9,392.5 888.1,388.8 889.0,392.5 890.6,390.0 892.8,395.0 894.4,397.5 895.6,405.0 896.9,398.8 898.8,401.2 900.4,394.4 902.2,395.0 904.4,392.5 906.2,382.5 907.8,387.5 908.5,386.9 910.0,393.8 911.9,394.4 913.1,395.6 915.6,380.0 918.8,398.8 921.0,393.8 923.1,396.2 925.0,389.4 927.5,388.8 929.4,390.6 932.2,379.4 934.4,385.0 936.2,383.8 937.9,377.5 940.2,392.5 942.2,391.9 943.5,386.2 946.2,386.2 948.8,398.1 950.6,398.8 954.4,388.1 956.2,393.8 958.8,386.9 960.2,386.9 961.2,385.6 962.8,392.5 965.0,392.5 968.1,380.6 970.2,388.8 973.1,377.5 975.0,387.5 977.5,382.5 979.0,380.0 981.0,388.1 982.8,380.6 985.0,382.5 986.9,381.9 989.4,388.8 991.0,383.1 992.5,383.8 994.4,388.1 995.6,386.9 997.5,391.9 999.0,398.8 1000.6,393.1 1001.9,395.0 1003.8,391.2 1006.2,383.1 1007.8,384.4 1009.4,381.9 1011.5,378.8 1013.1,390.6 1014.8,383.8 1016.9,388.1 1018.8,395.0 1020.6,385.6 1024.4,382.5 1026.9,385.0 1031.0,376.9 1032.8,381.9 1035.6,380.6 1037.8,375.0 1039.8,380.6 1043.1,385.6 1044.4,382.5 1047.2,393.8 1049.4,385.0 1051.2,384.4 1052.8,387.5 1055.0,383.8 1057.5,387.5 1060.0,383.8 1061.9,387.5 1063.5,390.0 1065.2,381.2 1066.5,383.1 1067.8,380.6 1069.4,389.4 1071.2,378.8 1073.1,379.4 1075.0,383.8 1078.8,375.6 1082.5,391.2 1085.2,381.9 1086.9,379.4 1088.1,381.9 1091.0,385.0 1093.1,381.9 1095.2,381.2 1097.5,373.8 1098.8,380.0 1100.0,375.0 1101.9,375.6 1103.8,381.2 1105.6,384.4 1107.5,377.5 1109.4,380.6 1111.9,383.1 1115.0,378.8 1118.1,385.0 1120.6,380.0 1122.8,389.4 1125.6,387.5 1128.5,382.5 1129.4,390.6 1131.0,379.4 1134.0,378.8 1135.6,384.4 1137.5,386.2 1141.9,385.0 1144.8,375.6 1146.2,386.9 1148.1,376.2 1150.0,377.5 1151.9,388.8 1153.8,384.4 1155.6,385.0 1158.1,382.5 1160.6,383.8 1162.5,391.2 1165.0,383.1 1166.9,385.0 1169.0,388.8 1171.0,383.1 1172.8,386.9 1174.8,380.6 1176.5,383.1 1179.0,389.4 1181.2,382.5 1183.1,385.6 1185.6,389.4 1187.2,380.6 1189.4,383.8 1191.2,383.8 1193.8,389.4 1195.6,385.0 1198.1,384.4 1200.0,381.2 1201.5,385.0 1203.1,386.2 1204.6,395.6 1206.9,385.6 1209.8,382.5 1213.8,386.9 1218.1,384.4 1219.8,380.6 1222.2,388.8 1223.8,381.2 1226.5,388.8 1228.5,385.0 1230.6,389.4 1233.1,381.9 1235.0,386.2 1236.9,387.5 1239.0,378.1 1242.2,385.6 1244.4,383.8 1246.2,385.0 1247.8,383.8 1250.0,391.2 1251.5,393.1 1253.8,398.1 1256.0,388.1 1257.8,388.8 1260.2,388.1 1262.1,393.8 1264.4,383.1 1266.9,365.6 1268.1,387.5 1269.4,394.4 1271.2,391.9 1273.8,395.6 1277.2,382.5 1278.8,385.0 1280.0,383.8 1281.5,390.0 1282.5,386.9 1284.0,395.0 1285.6,398.8 1287.2,384.4 1288.8,386.2 1290.6,381.9 1292.5,390.6 1294.0,381.9 1295.2,385.0 1299.8,385.0" fill="none" stroke="#0000ff" stroke-width="1.45" stroke-linejoin="round"/><line x1="515.2" y1="348.70" x2="515.2" y2="432.40" stroke="#000" stroke-width="0.9" stroke-dasharray="1.4 1.6"/></g>
<rect x="101.75" y="348.70" width="1197.85" height="83.70" fill="none" stroke="#000" stroke-width="0.9"/>
<text class="s" x="101.75" y="446.90" font-size="9.50" stroke="#000" text-anchor="middle">3500</text>
<text class="s" x="160.45" y="446.90" font-size="9.50" stroke="#000" text-anchor="middle">3600</text>
<text class="s" x="219.15" y="446.90" font-size="9.50" stroke="#000" text-anchor="middle">3700</text>
<text class="s" x="277.85" y="446.90" font-size="9.50" stroke="#000" text-anchor="middle">3800</text>
<text class="s" x="336.55" y="446.90" font-size="9.50" stroke="#000" text-anchor="middle">3900</text>
<text class="s" x="395.25" y="446.90" font-size="9.50" stroke="#000" text-anchor="middle">4000</text>
<text class="s" x="453.95" y="446.90" font-size="9.50" stroke="#000" text-anchor="middle">4100</text>
<text class="s" x="512.65" y="446.90" font-size="9.50" stroke="#000" text-anchor="middle">4200</text>
<text class="s" x="571.35" y="446.90" font-size="9.50" stroke="#000" text-anchor="middle">4300</text>
<text class="s" x="630.05" y="446.90" font-size="9.50" stroke="#000" text-anchor="middle">4400</text>
<text class="s" x="688.75" y="446.90" font-size="9.50" stroke="#000" text-anchor="middle">4500</text>
<text class="s" x="747.45" y="446.90" font-size="9.50" stroke="#000" text-anchor="middle">4600</text>
<text class="s" x="806.15" y="446.90" font-size="9.50" stroke="#000" text-anchor="middle">4700</text>
<text class="s" x="864.85" y="446.90" font-size="9.50" stroke="#000" text-anchor="middle">4800</text>
<text class="s" x="923.55" y="446.90" font-size="9.50" stroke="#000" text-anchor="middle">4900</text>
<text class="s" x="982.25" y="446.90" font-size="9.50" stroke="#000" text-anchor="middle">5000</text>
<text class="s" x="1040.95" y="446.90" font-size="9.50" stroke="#000" text-anchor="middle">5100</text>
<text class="s" x="1099.65" y="446.90" font-size="9.50" stroke="#000" text-anchor="middle">5200</text>
<text class="s" x="1158.35" y="446.90" font-size="9.50" stroke="#000" text-anchor="middle">5300</text>
<text class="s" x="1217.05" y="446.90" font-size="9.50" stroke="#000" text-anchor="middle">5400</text>
<text class="s" x="1275.75" y="446.90" font-size="9.50" stroke="#000" text-anchor="middle">5500</text>
<text class="s" x="95.00" y="430.30" font-size="9.50" stroke="#000" text-anchor="end">5</text>
<text class="s" x="95.00" y="407.55" font-size="9.50" stroke="#000" text-anchor="end">10</text>
<text class="s" x="95.00" y="384.80" font-size="9.50" stroke="#000" text-anchor="end">15</text>
<text class="s" x="95.00" y="362.05" font-size="9.50" stroke="#000" text-anchor="end">20</text>
<path d="M101.75 432.40v3.6M160.45 432.40v3.6M219.15 432.40v3.6M277.85 432.40v3.6M336.55 432.40v3.6M395.25 432.40v3.6M453.95 432.40v3.6M512.65 432.40v3.6M571.35 432.40v3.6M630.05 432.40v3.6M688.75 432.40v3.6M747.45 432.40v3.6M806.15 432.40v3.6M864.85 432.40v3.6M923.55 432.40v3.6M982.25 432.40v3.6M1040.95 432.40v3.6M1099.65 432.40v3.6M1158.35 432.40v3.6M1217.05 432.40v3.6M1275.75 432.40v3.6M101.75 426.00h-3.6M101.75 403.25h-3.6M101.75 380.50h-3.6M101.75 357.75h-3.6" stroke="#000" stroke-width="0.9" fill="none"/>
<text class="s" x="99.40" y="346.30" font-size="9.72" stroke="#000" xml:space="preserve">e</text>
<text class="s" x="105.38" y="341.22" font-size="6.80" stroke="#000">−17</text>
<text class="s" x="120.64" y="346.30" font-size="9.72" stroke="#000" xml:space="preserve">x2</text>
<text class="i" x="132.57" y="346.30" font-size="9.72" stroke="#000" xml:space="preserve">Å</text>
<g clip-path="url(#clab)">
<text class="s" font-size="9.72" fill="#ffa500" style="stroke:#ffa500" text-anchor="end" xml:space="preserve" transform="translate(143.50,306.50) rotate(90)">SiIV {</text>
<text class="s" font-size="9.72" fill="#ff0000" style="stroke:#ff0000" text-anchor="end" xml:space="preserve" transform="translate(142.50,348.70) rotate(90)">OVI  {</text>
<text class="s" font-size="9.72" fill="#800080" style="stroke:#800080" text-anchor="end" xml:space="preserve" transform="translate(162.50,348.70) rotate(90)">HeII {</text>
<text class="s" font-size="9.72" fill="#8a2be2" style="stroke:#8a2be2" text-anchor="end" xml:space="preserve" transform="translate(268.50,348.70) rotate(90)">SiIV {</text>
<text class="s" font-size="9.72" fill="#87ceeb" style="stroke:#87ceeb" text-anchor="end" xml:space="preserve" transform="translate(360.50,348.70) rotate(90)">OII  {</text>
<text class="s" font-size="9.72" fill="#ffa500" style="stroke:#ffa500" text-anchor="end" xml:space="preserve" transform="translate(373.50,348.70) rotate(90)">CIV  {</text>
<text class="s" font-size="9.72" fill="#87ceeb" style="stroke:#87ceeb" text-anchor="end" xml:space="preserve" transform="translate(382.00,348.70) rotate(90)">OII  {</text>
<text class="s" font-size="9.72" fill="#008000" style="stroke:#008000" text-anchor="end" xml:space="preserve" transform="translate(603.50,306.50) rotate(90)">NeIII {</text>
<text class="s" font-size="9.72" fill="#ff0000" style="stroke:#ff0000" text-anchor="end" xml:space="preserve" transform="translate(561.50,348.70) rotate(90)">NV   {</text>
<text class="s" font-size="9.72" fill="#ff0000" style="stroke:#ff0000" text-anchor="end" xml:space="preserve" transform="translate(607.50,348.70) rotate(90)">SiII {</text>
<text class="s" font-size="9.72" fill="#8a2be2" style="stroke:#8a2be2" text-anchor="end" xml:space="preserve" transform="translate(656.50,348.70) rotate(90)">HeII {</text>
<text class="s" font-size="9.72" fill="#87ceeb" style="stroke:#87ceeb" text-anchor="end" xml:space="preserve" transform="translate(742.00,348.70) rotate(90)">H<tspan font-style="italic">γ</tspan> {</text>
<text class="s" font-size="9.72" fill="#87ceeb" style="stroke:#87ceeb" text-anchor="end" xml:space="preserve" transform="translate(767.00,348.70) rotate(90)">H<tspan font-style="italic">γ</tspan> {</text>
<text class="s" font-size="9.72" fill="#ff0000" style="stroke:#ff0000" text-anchor="end" xml:space="preserve" transform="translate(881.50,348.70) rotate(90)">SiIV {</text>
<text class="s" font-size="9.72" fill="#ffa500" style="stroke:#ffa500" text-anchor="end" xml:space="preserve" transform="translate(915.70,306.50) rotate(90)">CIII {</text>
<text class="s" font-size="9.72" fill="#008000" style="stroke:#008000" text-anchor="end" xml:space="preserve" transform="translate(917.30,348.70) rotate(90)">H<tspan font-style="italic">γ</tspan> {</text>
<text class="s" font-size="9.72" fill="#800080" style="stroke:#800080" text-anchor="end" xml:space="preserve" transform="translate(1049.00,348.70) rotate(90)">CII  {</text>
<text class="s" font-size="9.72" fill="#87ceeb" style="stroke:#87ceeb" text-anchor="end" xml:space="preserve" transform="translate(1067.50,348.70) rotate(90)">H<tspan font-style="italic">β</tspan> {</text>
<text class="s" font-size="9.72" fill="#8a2be2" style="stroke:#8a2be2" text-anchor="end" xml:space="preserve" transform="translate(1083.80,348.70) rotate(90)">CIII {</text>
<text class="s" font-size="9.72" fill="#87ceeb" style="stroke:#87ceeb" text-anchor="end" xml:space="preserve" transform="translate(1094.50,348.70) rotate(90)">H<tspan font-style="italic">β</tspan> {</text>
<text class="s" font-size="9.72" fill="#87ceeb" style="stroke:#87ceeb" text-anchor="end" xml:space="preserve" transform="translate(1128.50,348.70) rotate(90)">OIII {</text>
<text class="s" font-size="9.72" fill="#87ceeb" style="stroke:#87ceeb" text-anchor="end" xml:space="preserve" transform="translate(1156.00,348.70) rotate(90)">OIII {</text>
<text class="s" font-size="9.72" fill="#87ceeb" style="stroke:#87ceeb" text-anchor="end" xml:space="preserve" transform="translate(1158.50,306.50) rotate(90)">OIII {</text>
<text class="s" font-size="9.72" fill="#87ceeb" style="stroke:#87ceeb" text-anchor="end" xml:space="preserve" transform="translate(1186.00,306.50) rotate(90)">OIII {</text>
<text class="s" font-size="9.72" fill="#ff0000" style="stroke:#ff0000" text-anchor="end" xml:space="preserve" transform="translate(1189.50,348.70) rotate(90)">CIV  {</text>
<text class="s" font-size="9.72" fill="#008000" style="stroke:#008000" text-anchor="end" xml:space="preserve" transform="translate(1263.30,348.70) rotate(90)">H<tspan font-style="italic">β</tspan> {</text>
</g>
<rect x="507.50" y="449.6" width="17" height="6.6" fill="#ff0000"/>
<text class="s" x="531.10" y="456.20" font-size="7.90" fill="#555" stroke="#555">Lyα</text>
<rect x="561.80" y="449.6" width="17" height="6.6" fill="#008000"/>
<text class="s" x="585.40" y="456.20" font-size="7.90" fill="#555" stroke="#555">OII</text>
<rect x="614.50" y="449.6" width="17" height="6.6" fill="#8a2be2"/>
<text class="s" x="638.10" y="456.20" font-size="7.90" fill="#555" stroke="#555">CIV</text>
<rect x="669.30" y="449.6" width="17" height="6.6" fill="#800080"/>
<text class="s" x="692.90" y="456.20" font-size="7.90" fill="#555" stroke="#555">CIII</text>
<rect x="721.30" y="449.6" width="17" height="6.6" fill="#ffa500"/>
<text class="s" x="744.90" y="456.20" font-size="7.90" fill="#555" stroke="#555">HeII</text>
<rect x="775.80" y="449.6" width="17" height="6.6" fill="#87ceeb"/>
<text class="s" x="799.40" y="456.20" font-size="7.90" fill="#555" stroke="#555">(K)CaII</text>
<rect x="841.50" y="449.6" width="17" height="6.6" fill="#87ceeb"/>
<text class="s" x="865.10" y="456.20" font-size="7.90" fill="#555" stroke="#555">(H)CaII</text>
<g clip-path="url(#cp1)"><rect x="70.20" y="532.60" width="148.20" height="147.90" fill="#fcfcfc"/><circle cx="0" cy="0" r="46" fill="url(#gal)" transform="translate(154.3,604.3) scale(1.08,1)"/></g>
<circle cx="98.4" cy="571.1" r="12.4" fill="none" stroke="#8e8e8e" stroke-width="2.2" stroke-dasharray="3.6 2.4"/>
<circle cx="98.4" cy="571.1" r="12.1" fill="none" stroke="#6a6a6a" stroke-width="1"/>
<circle cx="121.9" cy="566.2" r="12.4" fill="none" stroke="#8e8e8e" stroke-width="2.2" stroke-dasharray="3.6 2.4"/>
<circle cx="121.9" cy="566.2" r="12.1" fill="none" stroke="#6a6a6a" stroke-width="1"/>
<circle cx="145.3" cy="562.3" r="12.4" fill="none" stroke="#8e8e8e" stroke-width="2.2" stroke-dasharray="3.6 2.4"/>
<circle cx="145.3" cy="562.3" r="12.1" fill="none" stroke="#6a6a6a" stroke-width="1"/>
<circle cx="169.3" cy="560.1" r="12.1" fill="none" stroke="#6a6a6a" stroke-width="1"/>
<circle cx="184.3" cy="577.2" r="12.1" fill="none" stroke="#6a6a6a" stroke-width="1"/>
<circle cx="90.2" cy="594.2" r="12.4" fill="none" stroke="#8e8e8e" stroke-width="2.2" stroke-dasharray="3.6 2.4"/>
<circle cx="90.2" cy="594.2" r="12.1" fill="none" stroke="#6a6a6a" stroke-width="1"/>
<circle cx="113.8" cy="589.8" r="12.4" fill="none" stroke="#8e8e8e" stroke-width="2.2" stroke-dasharray="3.6 2.4"/>
<circle cx="113.8" cy="589.8" r="12.1" fill="none" stroke="#6a6a6a" stroke-width="1"/>
<circle cx="161.1" cy="581.0" r="12.1" fill="none" stroke="#6a6a6a" stroke-width="1"/>
<circle cx="175.9" cy="600.8" r="12.1" fill="none" stroke="#6a6a6a" stroke-width="1"/>
<circle cx="105.6" cy="612.9" r="12.4" fill="none" stroke="#8e8e8e" stroke-width="2.2" stroke-dasharray="3.6 2.4"/>
<circle cx="105.6" cy="612.9" r="12.1" fill="none" stroke="#6a6a6a" stroke-width="1"/>
<circle cx="191.5" cy="618.4" r="12.1" fill="none" stroke="#6a6a6a" stroke-width="1"/>
<circle cx="167.8" cy="622.8" r="12.1" fill="none" stroke="#6a6a6a" stroke-width="1"/>
<circle cx="96.8" cy="636.1" r="12.4" fill="none" stroke="#8e8e8e" stroke-width="2.2" stroke-dasharray="3.6 2.4"/>
<circle cx="96.8" cy="636.1" r="12.1" fill="none" stroke="#6a6a6a" stroke-width="1"/>
<circle cx="120.4" cy="631.7" r="12.4" fill="none" stroke="#8e8e8e" stroke-width="2.2" stroke-dasharray="3.6 2.4"/>
<circle cx="120.4" cy="631.7" r="12.1" fill="none" stroke="#6a6a6a" stroke-width="1"/>
<circle cx="183.6" cy="641.6" r="12.1" fill="none" stroke="#6a6a6a" stroke-width="1"/>
<circle cx="160.0" cy="646.0" r="12.1" fill="none" stroke="#6a6a6a" stroke-width="1"/>
<circle cx="136.5" cy="650.4" r="12.1" fill="none" stroke="#6a6a6a" stroke-width="1"/>
<circle cx="112.7" cy="654.8" r="12.1" fill="none" stroke="#6a6a6a" stroke-width="1"/>
<circle cx="137.4" cy="586.5" r="12.1" fill="none" stroke="#ff0000" stroke-width="1.3"/>
<circle cx="129.6" cy="608.5" r="12.1" fill="none" stroke="#00fa00" stroke-width="1.3"/>
<circle cx="144.6" cy="627.9" r="12.1" fill="none" stroke="#ffa500" stroke-width="1.3"/>
<circle cx="151.9" cy="604.1" r="12.1" fill="none" stroke="#0000ff" stroke-width="1.3"/>
<rect x="95.08" y="557.48" width="98.04" height="98.04" fill="none" stroke="#ff0000" stroke-width="1.5"/>
<path d="M140.60 606.50h7M144.10 603.00v7" stroke="#ff0000" stroke-width="1.2" fill="none"/>
<text class="s" x="144.10" y="545.80" font-size="9.72" fill="#ff0000" stroke="#ff0000" text-anchor="middle">N</text>
<text class="s" x="77.60" y="610.00" font-size="9.72" fill="#ff0000" stroke="#ff0000">E</text>
<rect x="70.20" y="532.60" width="148.20" height="147.90" fill="none" stroke="#222" stroke-width="1.15"/>
<text class="s" x="78.74" y="696.20" font-size="10.00" stroke="#000" text-anchor="middle">−4</text>
<text class="s" x="62.20" y="676.46" font-size="10.00" stroke="#000" text-anchor="end">−4</text>
<text class="s" x="111.42" y="696.20" font-size="10.00" stroke="#000" text-anchor="middle">−2</text>
<text class="s" x="62.20" y="643.78" font-size="10.00" stroke="#000" text-anchor="end">−2</text>
<text class="s" x="144.10" y="696.20" font-size="10.00" stroke="#000" text-anchor="middle">0</text>
<text class="s" x="62.20" y="611.10" font-size="10.00" stroke="#000" text-anchor="end">0</text>
<text class="s" x="176.78" y="696.20" font-size="10.00" stroke="#000" text-anchor="middle">2</text>
<text class="s" x="62.20" y="578.42" font-size="10.00" stroke="#000" text-anchor="end">2</text>
<text class="s" x="209.46" y="696.20" font-size="10.00" stroke="#000" text-anchor="middle">4</text>
<text class="s" x="62.20" y="545.74" font-size="10.00" stroke="#000" text-anchor="end">4</text>
<path d="M78.74 680.50v3.5M70.20 671.86h-3.5M111.42 680.50v3.5M70.20 639.18h-3.5M144.10 680.50v3.5M70.20 606.50h-3.5M176.78 680.50v3.5M70.20 573.82h-3.5M209.46 680.50v3.5M70.20 541.14h-3.5" stroke="#000" stroke-width="0.9" fill="none"/>
<text class="s" x="144.20" y="525.70" font-size="13.00" stroke="#000" text-anchor="middle">Fiber Positions</text>
<text class="s" x="144.20" y="706.50" font-size="10.90" stroke="#000" text-anchor="middle">arcsecs</text>
<g shape-rendering="crispEdges"><rect x="255.30" y="532.60" width="36.47" height="4.30" fill="#404387"/><rect x="291.47" y="532.60" width="4.32" height="4.30" fill="#3a528b"/><rect x="295.49" y="532.60" width="4.32" height="4.30" fill="#345e8d"/><rect x="299.51" y="532.60" width="4.32" height="4.30" fill="#2e6b8e"/><rect x="303.53" y="532.60" width="4.32" height="4.30" fill="#31658d"/><rect x="307.55" y="532.60" width="4.32" height="4.30" fill="#37588c"/><rect x="311.56" y="532.60" width="4.32" height="4.30" fill="#345e8d"/><rect x="315.58" y="532.60" width="4.32" height="4.30" fill="#2e6b8e"/><rect x="319.60" y="532.60" width="4.32" height="4.30" fill="#277d8e"/><rect x="323.62" y="532.60" width="12.36" height="4.30" fill="#22898d"/><rect x="335.68" y="532.60" width="8.34" height="4.30" fill="#24848d"/><rect x="343.72" y="532.60" width="4.32" height="4.30" fill="#277d8e"/><rect x="347.74" y="532.60" width="4.32" height="4.30" fill="#2c728e"/><rect x="351.75" y="532.60" width="4.32" height="4.30" fill="#345e8d"/><rect x="355.77" y="532.60" width="4.32" height="4.30" fill="#3a528b"/><rect x="359.79" y="532.60" width="4.32" height="4.30" fill="#3d4a89"/><rect x="363.81" y="532.60" width="4.32" height="4.30" fill="#404387"/><rect x="367.83" y="532.60" width="8.34" height="4.30" fill="#3d4a89"/><rect x="375.87" y="532.60" width="4.32" height="4.30" fill="#37588c"/><rect x="379.89" y="532.60" width="4.32" height="4.30" fill="#2e6b8e"/><rect x="383.91" y="532.60" width="4.32" height="4.30" fill="#277d8e"/><rect x="387.92" y="532.60" width="16.38" height="4.30" fill="#24848d"/><rect x="255.30" y="536.60" width="32.45" height="4.30" fill="#404387"/><rect x="287.45" y="536.60" width="4.32" height="4.30" fill="#3d4a89"/><rect x="291.47" y="536.60" width="4.32" height="4.30" fill="#3a528b"/><rect x="295.49" y="536.60" width="4.32" height="4.30" fill="#31658d"/><rect x="299.51" y="536.60" width="4.32" height="4.30" fill="#2c728e"/><rect x="303.53" y="536.60" width="4.32" height="4.30" fill="#2e6b8e"/><rect x="307.55" y="536.60" width="8.34" height="4.30" fill="#31658d"/><rect x="315.58" y="536.60" width="4.32" height="4.30" fill="#29788e"/><rect x="319.60" y="536.60" width="4.32" height="4.30" fill="#22898d"/><rect x="323.62" y="536.60" width="12.36" height="4.30" fill="#1f968b"/><rect x="335.68" y="536.60" width="4.32" height="4.30" fill="#20908c"/><rect x="339.70" y="536.60" width="4.32" height="4.30" fill="#22898d"/><rect x="343.72" y="536.60" width="4.32" height="4.30" fill="#24848d"/><rect x="347.74" y="536.60" width="4.32" height="4.30" fill="#29788e"/><rect x="351.75" y="536.60" width="4.32" height="4.30" fill="#31658d"/><rect x="355.77" y="536.60" width="4.32" height="4.30" fill="#3a528b"/><rect x="359.79" y="536.60" width="4.32" height="4.30" fill="#3d4a89"/><rect x="363.81" y="536.60" width="8.34" height="4.30" fill="#404387"/><rect x="371.85" y="536.60" width="4.32" height="4.30" fill="#3d4a89"/><rect x="375.87" y="536.60" width="4.32" height="4.30" fill="#37588c"/><rect x="379.89" y="536.60" width="4.32" height="4.30" fill="#2e6b8e"/><rect x="383.91" y="536.60" width="4.32" height="4.30" fill="#29788e"/><rect x="387.92" y="536.60" width="16.38" height="4.30" fill="#24848d"/><rect x="255.30" y="540.59" width="32.45" height="4.30" fill="#404387"/><rect x="287.45" y="540.59" width="4.32" height="4.30" fill="#3d4a89"/><rect x="291.47" y="540.59" width="4.32" height="4.30" fill="#345e8d"/><rect x="295.49" y="540.59" width="4.32" height="4.30" fill="#2c728e"/><rect x="299.51" y="540.59" width="4.32" height="4.30" fill="#277d8e"/><rect x="303.53" y="540.59" width="8.34" height="4.30" fill="#29788e"/><rect x="311.56" y="540.59" width="4.32" height="4.30" fill="#277d8e"/><rect x="315.58" y="540.59" width="4.32" height="4.30" fill="#22898d"/><rect x="319.60" y="540.59" width="4.32" height="4.30" fill="#1f968b"/><rect x="323.62" y="540.59" width="4.32" height="4.30" fill="#1fa286"/><rect x="327.64" y="540.59" width="8.34" height="4.30" fill="#22a784"/><rect x="335.68" y="540.59" width="4.32" height="4.30" fill="#1fa286"/><rect x="339.70" y="540.59" width="4.32" height="4.30" fill="#1f968b"/><rect x="343.72" y="540.59" width="4.32" height="4.30" fill="#20908c"/><rect x="347.74" y="540.59" width="4.32" height="4.30" fill="#277d8e"/><rect x="351.75" y="540.59" width="4.32" height="4.30" fill="#2e6b8e"/><rect x="355.77" y="540.59" width="4.32" height="4.30" fill="#37588c"/><rect x="359.79" y="540.59" width="8.34" height="4.30" fill="#3d4a89"/><rect x="367.83" y="540.59" width="4.32" height="4.30" fill="#404387"/><rect x="371.85" y="540.59" width="4.32" height="4.30" fill="#3d4a89"/><rect x="375.87" y="540.59" width="4.32" height="4.30" fill="#3a528b"/><rect x="379.89" y="540.59" width="4.32" height="4.30" fill="#345e8d"/><rect x="383.91" y="540.59" width="4.32" height="4.30" fill="#2c728e"/><rect x="387.92" y="540.59" width="4.32" height="4.30" fill="#277d8e"/><rect x="391.94" y="540.59" width="12.36" height="4.30" fill="#24848d"/><rect x="255.30" y="544.59" width="28.43" height="4.30" fill="#404387"/><rect x="283.43" y="544.59" width="4.32" height="4.30" fill="#3d4a89"/><rect x="287.45" y="544.59" width="4.32" height="4.30" fill="#3a528b"/><rect x="291.47" y="544.59" width="4.32" height="4.30" fill="#31658d"/><rect x="295.49" y="544.59" width="4.32" height="4.30" fill="#277d8e"/><rect x="299.51" y="544.59" width="4.32" height="4.30" fill="#24848d"/><rect x="303.53" y="544.59" width="8.34" height="4.30" fill="#22898d"/><rect x="311.56" y="544.59" width="4.32" height="4.30" fill="#20908c"/><rect x="315.58" y="544.59" width="4.32" height="4.30" fill="#1e9b89"/><rect x="319.60" y="544.59" width="4.32" height="4.30" fill="#22a784"/><rect x="323.62" y="544.59" width="4.32" height="4.30" fill="#2fb37b"/><rect x="327.64" y="544.59" width="4.32" height="4.30" fill="#4fc369"/><rect x="331.66" y="544.59" width="4.32" height="4.30" fill="#44be70"/><rect x="335.68" y="544.59" width="4.32" height="4.30" fill="#2fb37b"/><rect x="339.70" y="544.59" width="4.32" height="4.30" fill="#1fa286"/><rect x="343.72" y="544.59" width="4.32" height="4.30" fill="#1f968b"/><rect x="347.74" y="544.59" width="4.32" height="4.30" fill="#22898d"/><rect x="351.75" y="544.59" width="4.32" height="4.30" fill="#29788e"/><rect x="355.77" y="544.59" width="4.32" height="4.30" fill="#345e8d"/><rect x="359.79" y="544.59" width="4.32" height="4.30" fill="#3a528b"/><rect x="363.81" y="544.59" width="4.32" height="4.30" fill="#3d4a89"/><rect x="367.83" y="544.59" width="4.32" height="4.30" fill="#404387"/><rect x="371.85" y="544.59" width="8.34" height="4.30" fill="#3d4a89"/><rect x="379.89" y="544.59" width="4.32" height="4.30" fill="#37588c"/><rect x="383.91" y="544.59" width="4.32" height="4.30" fill="#2e6b8e"/><rect x="387.92" y="544.59" width="4.32" height="4.30" fill="#29788e"/><rect x="391.94" y="544.59" width="12.36" height="4.30" fill="#24848d"/><rect x="255.30" y="548.59" width="28.43" height="4.30" fill="#404387"/><rect x="283.43" y="548.59" width="4.32" height="4.30" fill="#3d4a89"/><rect x="287.45" y="548.59" width="4.32" height="4.30" fill="#37588c"/><rect x="291.47" y="548.59" width="4.32" height="4.30" fill="#2c728e"/><rect x="295.49" y="548.59" width="4.32" height="4.30" fill="#24848d"/><rect x="299.51" y="548.59" width="4.32" height="4.30" fill="#20908c"/><rect x="303.53" y="548.59" width="8.34" height="4.30" fill="#1f968b"/><rect x="311.56" y="548.59" width="4.32" height="4.30" fill="#1fa286"/><rect x="315.58" y="548.59" width="4.32" height="4.30" fill="#22a784"/><rect x="319.60" y="548.59" width="4.32" height="4.30" fill="#38b976"/><rect x="323.62" y="548.59" width="4.32" height="4.30" fill="#79d151"/><rect x="327.64" y="548.59" width="8.34" height="4.30" fill="#bdde26"/><rect x="335.68" y="548.59" width="4.32" height="4.30" fill="#6bcd59"/><rect x="339.70" y="548.59" width="4.32" height="4.30" fill="#2fb37b"/><rect x="343.72" y="548.59" width="4.32" height="4.30" fill="#1fa286"/><rect x="347.74" y="548.59" width="4.32" height="4.30" fill="#20908c"/><rect x="351.75" y="548.59" width="4.32" height="4.30" fill="#277d8e"/><rect x="355.77" y="548.59" width="4.32" height="4.30" fill="#31658d"/><rect x="359.79" y="548.59" width="4.32" height="4.30" fill="#3a528b"/><rect x="363.81" y="548.59" width="4.32" height="4.30" fill="#3d4a89"/><rect x="367.83" y="548.59" width="8.34" height="4.30" fill="#404387"/><rect x="375.87" y="548.59" width="4.32" height="4.30" fill="#3d4a89"/><rect x="379.89" y="548.59" width="4.32" height="4.30" fill="#3a528b"/><rect x="383.91" y="548.59" width="4.32" height="4.30" fill="#31658d"/><rect x="387.92" y="548.59" width="4.32" height="4.30" fill="#2c728e"/><rect x="391.94" y="548.59" width="4.32" height="4.30" fill="#277d8e"/><rect x="395.96" y="548.59" width="8.34" height="4.30" fill="#24848d"/><rect x="255.30" y="552.59" width="28.43" height="4.30" fill="#404387"/><rect x="283.43" y="552.59" width="4.32" height="4.30" fill="#3a528b"/><rect x="287.45" y="552.59" width="4.32" height="4.30" fill="#31658d"/><rect x="291.47" y="552.59" width="4.32" height="4.30" fill="#29788e"/><rect x="295.49" y="552.59" width="4.32" height="4.30" fill="#22898d"/><rect x="299.51" y="552.59" width="4.32" height="4.30" fill="#1f968b"/><rect x="303.53" y="552.59" width="4.32" height="4.30" fill="#1e9b89"/><rect x="307.55" y="552.59" width="4.32" height="4.30" fill="#1fa286"/><rect x="311.56" y="552.59" width="4.32" height="4.30" fill="#28ae7f"/><rect x="315.58" y="552.59" width="4.32" height="4.30" fill="#38b976"/><rect x="319.60" y="552.59" width="4.32" height="4.30" fill="#79d151"/><rect x="323.62" y="552.59" width="4.32" height="4.30" fill="#dfe318"/><rect x="327.64" y="552.59" width="8.34" height="4.30" fill="#fde724"/><rect x="335.68" y="552.59" width="4.32" height="4.30" fill="#cde01d"/><rect x="339.70" y="552.59" width="4.32" height="4.30" fill="#4fc369"/><rect x="343.72" y="552.59" width="4.32" height="4.30" fill="#22a784"/><rect x="347.74" y="552.59" width="4.32" height="4.30" fill="#1e9b89"/><rect x="351.75" y="552.59" width="4.32" height="4.30" fill="#22898d"/><rect x="355.77" y="552.59" width="4.32" height="4.30" fill="#2c728e"/><rect x="359.79" y="552.59" width="4.32" height="4.30" fill="#37588c"/><rect x="363.81" y="552.59" width="8.34" height="4.30" fill="#3d4a89"/><rect x="371.85" y="552.59" width="4.32" height="4.30" fill="#404387"/><rect x="375.87" y="552.59" width="8.34" height="4.30" fill="#3d4a89"/><rect x="383.91" y="552.59" width="4.32" height="4.30" fill="#37588c"/><rect x="387.92" y="552.59" width="4.32" height="4.30" fill="#2e6b8e"/><rect x="391.94" y="552.59" width="4.32" height="4.30" fill="#277d8e"/><rect x="395.96" y="552.59" width="8.34" height="4.30" fill="#24848d"/><rect x="255.30" y="556.58" width="24.41" height="4.30" fill="#404387"/><rect x="279.41" y="556.58" width="4.32" height="4.30" fill="#3d4a89"/><rect x="283.43" y="556.58" width="4.32" height="4.30" fill="#37588c"/><rect x="287.45" y="556.58" width="4.32" height="4.30" fill="#2c728e"/><rect x="291.47" y="556.58" width="4.32" height="4.30" fill="#24848d"/><rect x="295.49" y="556.58" width="4.32" height="4.30" fill="#20908c"/><rect x="299.51" y="556.58" width="4.32" height="4.30" fill="#1e9b89"/><rect x="303.53" y="556.58" width="4.32" height="4.30" fill="#1fa286"/><rect x="307.55" y="556.58" width="4.32" height="4.30" fill="#22a784"/><rect x="311.56" y="556.58" width="4.32" height="4.30" fill="#38b976"/><rect x="315.58" y="556.58" width="4.32" height="4.30" fill="#6bcd59"/><rect x="319.60" y="556.58" width="4.32" height="4.30" fill="#dfe318"/><rect x="323.62" y="556.58" width="16.38" height="4.30" fill="#fde724"/><rect x="339.70" y="556.58" width="4.32" height="4.30" fill="#9ad83c"/><rect x="343.72" y="556.58" width="4.32" height="4.30" fill="#38b976"/><rect x="347.74" y="556.58" width="4.32" height="4.30" fill="#1fa286"/><rect x="351.75" y="556.58" width="4.32" height="4.30" fill="#20908c"/><rect x="355.77" y="556.58" width="4.32" height="4.30" fill="#29788e"/><rect x="359.79" y="556.58" width="4.32" height="4.30" fill="#345e8d"/><rect x="363.81" y="556.58" width="4.32" height="4.30" fill="#3a528b"/><rect x="367.83" y="556.58" width="4.32" height="4.30" fill="#3d4a89"/><rect x="371.85" y="556.58" width="8.34" height="4.30" fill="#404387"/><rect x="379.89" y="556.58" width="4.32" height="4.30" fill="#3d4a89"/><rect x="383.91" y="556.58" width="4.32" height="4.30" fill="#3a528b"/><rect x="387.92" y="556.58" width="4.32" height="4.30" fill="#31658d"/><rect x="391.94" y="556.58" width="4.32" height="4.30" fill="#29788e"/><rect x="395.96" y="556.58" width="4.32" height="4.30" fill="#277d8e"/><rect x="399.98" y="556.58" width="4.32" height="4.30" fill="#24848d"/><rect x="255.30" y="560.58" width="24.41" height="4.30" fill="#404387"/><rect x="279.41" y="560.58" width="4.32" height="4.30" fill="#3a528b"/><rect x="283.43" y="560.58" width="4.32" height="4.30" fill="#345e8d"/><rect x="287.45" y="560.58" width="4.32" height="4.30" fill="#29788e"/><rect x="291.47" y="560.58" width="4.32" height="4.30" fill="#22898d"/><rect x="295.49" y="560.58" width="4.32" height="4.30" fill="#1f968b"/><rect x="299.51" y="560.58" width="4.32" height="4.30" fill="#1fa286"/><rect x="303.53" y="560.58" width="4.32" height="4.30" fill="#22a784"/><rect x="307.55" y="560.58" width="4.32" height="4.30" fill="#2fb37b"/><rect x="311.56" y="560.58" width="4.32" height="4.30" fill="#5ec961"/><rect x="315.58" y="560.58" width="4.32" height="4.30" fill="#cde01d"/><rect x="319.60" y="560.58" width="20.39" height="4.30" fill="#fde724"/><rect x="339.70" y="560.58" width="4.32" height="4.30" fill="#eee51b"/><rect x="343.72" y="560.58" width="4.32" height="4.30" fill="#6bcd59"/><rect x="347.74" y="560.58" width="4.32" height="4.30" fill="#28ae7f"/><rect x="351.75" y="560.58" width="4.32" height="4.30" fill="#1e9b89"/><rect x="355.77" y="560.58" width="4.32" height="4.30" fill="#24848d"/><rect x="359.79" y="560.58" width="4.32" height="4.30" fill="#2e6b8e"/><rect x="363.81" y="560.58" width="4.32" height="4.30" fill="#37588c"/><rect x="367.83" y="560.58" width="4.32" height="4.30" fill="#3d4a89"/><rect x="371.85" y="560.58" width="8.34" height="4.30" fill="#404387"/><rect x="379.89" y="560.58" width="8.34" height="4.30" fill="#3d4a89"/><rect x="387.92" y="560.58" width="4.32" height="4.30" fill="#37588c"/><rect x="391.94" y="560.58" width="4.32" height="4.30" fill="#2e6b8e"/><rect x="395.96" y="560.58" width="4.32" height="4.30" fill="#277d8e"/><rect x="399.98" y="560.58" width="4.32" height="4.30" fill="#24848d"/><rect x="255.30" y="564.58" width="20.39" height="4.30" fill="#404387"/><rect x="275.39" y="564.58" width="4.32" height="4.30" fill="#3d4a89"/><rect x="279.41" y="564.58" width="4.32" height="4.30" fill="#37588c"/><rect x="283.43" y="564.58" width="4.32" height="4.30" fill="#2e6b8e"/><rect x="287.45" y="564.58" width="4.32" height="4.30" fill="#24848d"/><rect x="291.47" y="564.58" width="4.32" height="4.30" fill="#1f968b"/><rect x="295.49" y="564.58" width="4.32" height="4.30" fill="#1e9b89"/><rect x="299.51" y="564.58" width="4.32" height="4.30" fill="#22a784"/><rect x="303.53" y="564.58" width="4.32" height="4.30" fill="#2fb37b"/><rect x="307.55" y="564.58" width="4.32" height="4.30" fill="#4fc369"/><rect x="311.56" y="564.58" width="4.32" height="4.30" fill="#addc30"/><rect x="315.58" y="564.58" width="28.43" height="4.30" fill="#fde724"/><rect x="343.72" y="564.58" width="4.32" height="4.30" fill="#bdde26"/><rect x="347.74" y="564.58" width="4.32" height="4.30" fill="#44be70"/><rect x="351.75" y="564.58" width="4.32" height="4.30" fill="#1fa286"/><rect x="355.77" y="564.58" width="4.32" height="4.30" fill="#20908c"/><rect x="359.79" y="564.58" width="4.32" height="4.30" fill="#29788e"/><rect x="363.81" y="564.58" width="4.32" height="4.30" fill="#345e8d"/><rect x="367.83" y="564.58" width="8.34" height="4.30" fill="#3d4a89"/><rect x="375.87" y="564.58" width="8.34" height="4.30" fill="#404387"/><rect x="383.91" y="564.58" width="4.32" height="4.30" fill="#3d4a89"/><rect x="387.92" y="564.58" width="4.32" height="4.30" fill="#3a528b"/><rect x="391.94" y="564.58" width="4.32" height="4.30" fill="#31658d"/><rect x="395.96" y="564.58" width="4.32" height="4.30" fill="#29788e"/><rect x="399.98" y="564.58" width="4.32" height="4.30" fill="#277d8e"/><rect x="255.30" y="568.58" width="20.39" height="4.30" fill="#404387"/><rect x="275.39" y="568.58" width="4.32" height="4.30" fill="#3d4a89"/><rect x="279.41" y="568.58" width="4.32" height="4.30" fill="#345e8d"/><rect x="283.43" y="568.58" width="4.32" height="4.30" fill="#29788e"/><rect x="287.45" y="568.58" width="4.32" height="4.30" fill="#20908c"/><rect x="291.47" y="568.58" width="4.32" height="4.30" fill="#1e9b89"/><rect x="295.49" y="568.58" width="4.32" height="4.30" fill="#22a784"/><rect x="299.51" y="568.58" width="4.32" height="4.30" fill="#2fb37b"/><rect x="303.53" y="568.58" width="4.32" height="4.30" fill="#44be70"/><rect x="307.55" y="568.58" width="4.32" height="4.30" fill="#8bd546"/><rect x="311.56" y="568.58" width="4.32" height="4.30" fill="#eee51b"/><rect x="315.58" y="568.58" width="28.43" height="4.30" fill="#fde724"/><rect x="343.72" y="568.58" width="4.32" height="4.30" fill="#eee51b"/><rect x="347.74" y="568.58" width="4.32" height="4.30" fill="#79d151"/><rect x="351.75" y="568.58" width="4.32" height="4.30" fill="#2fb37b"/><rect x="355.77" y="568.58" width="4.32" height="4.30" fill="#1e9b89"/><rect x="359.79" y="568.58" width="4.32" height="4.30" fill="#24848d"/><rect x="363.81" y="568.58" width="4.32" height="4.30" fill="#31658d"/><rect x="367.83" y="568.58" width="4.32" height="4.30" fill="#3a528b"/><rect x="371.85" y="568.58" width="4.32" height="4.30" fill="#3d4a89"/><rect x="375.87" y="568.58" width="8.34" height="4.30" fill="#404387"/><rect x="383.91" y="568.58" width="8.34" height="4.30" fill="#3d4a89"/><rect x="391.94" y="568.58" width="4.32" height="4.30" fill="#345e8d"/><rect x="395.96" y="568.58" width="4.32" height="4.30" fill="#2c728e"/><rect x="399.98" y="568.58" width="4.32" height="4.30" fill="#277d8e"/><rect x="255.30" y="572.57" width="16.38" height="4.30" fill="#404387"/><rect x="271.38" y="572.57" width="4.32" height="4.30" fill="#3d4a89"/><rect x="275.39" y="572.57" width="4.32" height="4.30" fill="#37588c"/><rect x="279.41" y="572.57" width="4.32" height="4.30" fill="#2e6b8e"/><rect x="283.43" y="572.57" width="4.32" height="4.30" fill="#24848d"/><rect x="287.45" y="572.57" width="4.32" height="4.30" fill="#1f968b"/><rect x="291.47" y="572.57" width="4.32" height="4.30" fill="#1fa286"/><rect x="295.49" y="572.57" width="4.32" height="4.30" fill="#28ae7f"/><rect x="299.51" y="572.57" width="4.32" height="4.30" fill="#44be70"/><rect x="303.53" y="572.57" width="4.32" height="4.30" fill="#79d151"/><rect x="307.55" y="572.57" width="4.32" height="4.30" fill="#dfe318"/><rect x="311.56" y="572.57" width="36.47" height="4.30" fill="#fde724"/><rect x="347.74" y="572.57" width="4.32" height="4.30" fill="#cde01d"/><rect x="351.75" y="572.57" width="4.32" height="4.30" fill="#4fc369"/><rect x="355.77" y="572.57" width="4.32" height="4.30" fill="#22a784"/><rect x="359.79" y="572.57" width="4.32" height="4.30" fill="#20908c"/><rect x="363.81" y="572.57" width="4.32" height="4.30" fill="#2c728e"/><rect x="367.83" y="572.57" width="4.32" height="4.30" fill="#37588c"/><rect x="371.85" y="572.57" width="8.34" height="4.30" fill="#3d4a89"/><rect x="379.89" y="572.57" width="8.34" height="4.30" fill="#404387"/><rect x="387.92" y="572.57" width="4.32" height="4.30" fill="#3d4a89"/><rect x="391.94" y="572.57" width="4.32" height="4.30" fill="#3a528b"/><rect x="395.96" y="572.57" width="4.32" height="4.30" fill="#31658d"/><rect x="399.98" y="572.57" width="4.32" height="4.30" fill="#2c728e"/><rect x="255.30" y="576.57" width="16.38" height="4.30" fill="#404387"/><rect x="271.38" y="576.57" width="4.32" height="4.30" fill="#3d4a89"/><rect x="275.39" y="576.57" width="4.32" height="4.30" fill="#345e8d"/><rect x="279.41" y="576.57" width="4.32" height="4.30" fill="#29788e"/><rect x="283.43" y="576.57" width="4.32" height="4.30" fill="#20908c"/><rect x="287.45" y="576.57" width="4.32" height="4.30" fill="#1fa286"/><rect x="291.47" y="576.57" width="4.32" height="4.30" fill="#28ae7f"/><rect x="295.49" y="576.57" width="4.32" height="4.30" fill="#38b976"/><rect x="299.51" y="576.57" width="4.32" height="4.30" fill="#6bcd59"/><rect x="303.53" y="576.57" width="4.32" height="4.30" fill="#cde01d"/><rect x="307.55" y="576.57" width="44.51" height="4.30" fill="#fde724"/><rect x="351.75" y="576.57" width="4.32" height="4.30" fill="#8bd546"/><rect x="355.77" y="576.57" width="4.32" height="4.30" fill="#2fb37b"/><rect x="359.79" y="576.57" width="4.32" height="4.30" fill="#1e9b89"/><rect x="363.81" y="576.57" width="4.32" height="4.30" fill="#277d8e"/><rect x="367.83" y="576.57" width="4.32" height="4.30" fill="#345e8d"/><rect x="371.85" y="576.57" width="4.32" height="4.30" fill="#3a528b"/><rect x="375.87" y="576.57" width="4.32" height="4.30" fill="#3d4a89"/><rect x="379.89" y="576.57" width="8.34" height="4.30" fill="#404387"/><rect x="387.92" y="576.57" width="4.32" height="4.30" fill="#3d4a89"/><rect x="391.94" y="576.57" width="4.32" height="4.30" fill="#3a528b"/><rect x="395.96" y="576.57" width="4.32" height="4.30" fill="#345e8d"/><rect x="399.98" y="576.57" width="4.32" height="4.30" fill="#2e6b8e"/><rect x="255.30" y="580.57" width="12.36" height="4.30" fill="#404387"/><rect x="267.36" y="580.57" width="4.32" height="4.30" fill="#3d4a89"/><rect x="271.38" y="580.57" width="4.32" height="4.30" fill="#3a528b"/><rect x="275.39" y="580.57" width="4.32" height="4.30" fill="#2e6b8e"/><rect x="279.41" y="580.57" width="4.32" height="4.30" fill="#24848d"/><rect x="283.43" y="580.57" width="4.32" height="4.30" fill="#1e9b89"/><rect x="287.45" y="580.57" width="4.32" height="4.30" fill="#22a784"/><rect x="291.47" y="580.57" width="4.32" height="4.30" fill="#38b976"/><rect x="295.49" y="580.57" width="4.32" height="4.30" fill="#5ec961"/><rect x="299.51" y="580.57" width="4.32" height="4.30" fill="#bdde26"/><rect x="303.53" y="580.57" width="48.53" height="4.30" fill="#fde724"/><rect x="351.75" y="580.57" width="4.32" height="4.30" fill="#dfe318"/><rect x="355.77" y="580.57" width="4.32" height="4.30" fill="#5ec961"/><rect x="359.79" y="580.57" width="4.32" height="4.30" fill="#22a784"/><rect x="363.81" y="580.57" width="4.32" height="4.30" fill="#22898d"/><rect x="367.83" y="580.57" width="4.32" height="4.30" fill="#2e6b8e"/><rect x="371.85" y="580.57" width="4.32" height="4.30" fill="#37588c"/><rect x="375.87" y="580.57" width="8.34" height="4.30" fill="#3d4a89"/><rect x="383.91" y="580.57" width="4.32" height="4.30" fill="#404387"/><rect x="387.92" y="580.57" width="8.34" height="4.30" fill="#3d4a89"/><rect x="395.96" y="580.57" width="4.32" height="4.30" fill="#3a528b"/><rect x="399.98" y="580.57" width="4.32" height="4.30" fill="#345e8d"/><rect x="255.30" y="584.56" width="12.36" height="4.30" fill="#404387"/><rect x="267.36" y="584.56" width="4.32" height="4.30" fill="#3d4a89"/><rect x="271.38" y="584.56" width="4.32" height="4.30" fill="#345e8d"/><rect x="275.39" y="584.56" width="4.32" height="4.30" fill="#29788e"/><rect x="279.41" y="584.56" width="4.32" height="4.30" fill="#20908c"/><rect x="283.43" y="584.56" width="4.32" height="4.30" fill="#1fa286"/><rect x="287.45" y="584.56" width="4.32" height="4.30" fill="#2fb37b"/><rect x="291.47" y="584.56" width="4.32" height="4.30" fill="#44be70"/><rect x="295.49" y="584.56" width="4.32" height="4.30" fill="#8bd546"/><rect x="299.51" y="584.56" width="4.32" height="4.30" fill="#eee51b"/><rect x="303.53" y="584.56" width="52.55" height="4.30" fill="#fde724"/><rect x="355.77" y="584.56" width="4.32" height="4.30" fill="#addc30"/><rect x="359.79" y="584.56" width="4.32" height="4.30" fill="#38b976"/><rect x="363.81" y="584.56" width="4.32" height="4.30" fill="#1f968b"/><rect x="367.83" y="584.56" width="4.32" height="4.30" fill="#29788e"/><rect x="371.85" y="584.56" width="4.32" height="4.30" fill="#345e8d"/><rect x="375.87" y="584.56" width="8.34" height="4.30" fill="#3d4a89"/><rect x="383.91" y="584.56" width="8.34" height="4.30" fill="#404387"/><rect x="391.94" y="584.56" width="8.34" height="4.30" fill="#3d4a89"/><rect x="399.98" y="584.56" width="4.32" height="4.30" fill="#3a528b"/><rect x="255.30" y="588.56" width="8.34" height="4.30" fill="#404387"/><rect x="263.34" y="588.56" width="4.32" height="4.30" fill="#3d4a89"/><rect x="267.36" y="588.56" width="4.32" height="4.30" fill="#3a528b"/><rect x="271.38" y="588.56" width="4.32" height="4.30" fill="#2e6b8e"/><rect x="275.39" y="588.56" width="4.32" height="4.30" fill="#24848d"/><rect x="279.41" y="588.56" width="4.32" height="4.30" fill="#1e9b89"/><rect x="283.43" y="588.56" width="4.32" height="4.30" fill="#28ae7f"/><rect x="287.45" y="588.56" width="4.32" height="4.30" fill="#38b976"/><rect x="291.47" y="588.56" width="4.32" height="4.30" fill="#5ec961"/><rect x="295.49" y="588.56" width="4.32" height="4.30" fill="#cde01d"/><rect x="299.51" y="588.56" width="56.56" height="4.30" fill="#fde724"/><rect x="355.77" y="588.56" width="4.32" height="4.30" fill="#eee51b"/><rect x="359.79" y="588.56" width="4.32" height="4.30" fill="#6bcd59"/><rect x="363.81" y="588.56" width="4.32" height="4.30" fill="#22a784"/><rect x="367.83" y="588.56" width="4.32" height="4.30" fill="#24848d"/><rect x="371.85" y="588.56" width="4.32" height="4.30" fill="#31658d"/><rect x="375.87" y="588.56" width="4.32" height="4.30" fill="#3a528b"/><rect x="379.89" y="588.56" width="8.34" height="4.30" fill="#3d4a89"/><rect x="387.92" y="588.56" width="8.34" height="4.30" fill="#404387"/><rect x="395.96" y="588.56" width="8.34" height="4.30" fill="#3d4a89"/><rect x="255.30" y="592.56" width="8.34" height="4.30" fill="#404387"/><rect x="263.34" y="592.56" width="4.32" height="4.30" fill="#3d4a89"/><rect x="267.36" y="592.56" width="4.32" height="4.30" fill="#37588c"/><rect x="271.38" y="592.56" width="4.32" height="4.30" fill="#2c728e"/><rect x="275.39" y="592.56" width="4.32" height="4.30" fill="#20908c"/><rect x="279.41" y="592.56" width="4.32" height="4.30" fill="#22a784"/><rect x="283.43" y="592.56" width="4.32" height="4.30" fill="#2fb37b"/><rect x="287.45" y="592.56" width="4.32" height="4.30" fill="#44be70"/><rect x="291.47" y="592.56" width="4.32" height="4.30" fill="#6bcd59"/><rect x="295.49" y="592.56" width="4.32" height="4.30" fill="#cde01d"/><rect x="299.51" y="592.56" width="60.58" height="4.30" fill="#fde724"/><rect x="359.79" y="592.56" width="4.32" height="4.30" fill="#bdde26"/><rect x="363.81" y="592.56" width="4.32" height="4.30" fill="#38b976"/><rect x="367.83" y="592.56" width="4.32" height="4.30" fill="#20908c"/><rect x="371.85" y="592.56" width="4.32" height="4.30" fill="#2c728e"/><rect x="375.87" y="592.56" width="4.32" height="4.30" fill="#37588c"/><rect x="379.89" y="592.56" width="8.34" height="4.30" fill="#3d4a89"/><rect x="387.92" y="592.56" width="16.38" height="4.30" fill="#404387"/><rect x="255.30" y="596.56" width="8.34" height="4.30" fill="#404387"/><rect x="263.34" y="596.56" width="4.32" height="4.30" fill="#3a528b"/><rect x="267.36" y="596.56" width="4.32" height="4.30" fill="#31658d"/><rect x="271.38" y="596.56" width="4.32" height="4.30" fill="#24848d"/><rect x="275.39" y="596.56" width="4.32" height="4.30" fill="#1e9b89"/><rect x="279.41" y="596.56" width="4.32" height="4.30" fill="#28ae7f"/><rect x="283.43" y="596.56" width="4.32" height="4.30" fill="#38b976"/><rect x="287.45" y="596.56" width="4.32" height="4.30" fill="#4fc369"/><rect x="291.47" y="596.56" width="4.32" height="4.30" fill="#6bcd59"/><rect x="295.49" y="596.56" width="4.32" height="4.30" fill="#bdde26"/><rect x="299.51" y="596.56" width="64.60" height="4.30" fill="#fde724"/><rect x="363.81" y="596.56" width="4.32" height="4.30" fill="#79d151"/><rect x="367.83" y="596.56" width="4.32" height="4.30" fill="#1fa286"/><rect x="371.85" y="596.56" width="4.32" height="4.30" fill="#277d8e"/><rect x="375.87" y="596.56" width="4.32" height="4.30" fill="#345e8d"/><rect x="379.89" y="596.56" width="4.32" height="4.30" fill="#3a528b"/><rect x="383.91" y="596.56" width="8.34" height="4.30" fill="#3d4a89"/><rect x="391.94" y="596.56" width="12.36" height="4.30" fill="#404387"/><rect x="255.30" y="600.55" width="4.32" height="4.30" fill="#404387"/><rect x="259.32" y="600.55" width="4.32" height="4.30" fill="#3d4a89"/><rect x="263.34" y="600.55" width="4.32" height="4.30" fill="#37588c"/><rect x="267.36" y="600.55" width="4.32" height="4.30" fill="#2c728e"/><rect x="271.38" y="600.55" width="4.32" height="4.30" fill="#20908c"/><rect x="275.39" y="600.55" width="4.32" height="4.30" fill="#1fa286"/><rect x="279.41" y="600.55" width="4.32" height="4.30" fill="#2fb37b"/><rect x="283.43" y="600.55" width="4.32" height="4.30" fill="#44be70"/><rect x="287.45" y="600.55" width="4.32" height="4.30" fill="#5ec961"/><rect x="291.47" y="600.55" width="4.32" height="4.30" fill="#6bcd59"/><rect x="295.49" y="600.55" width="4.32" height="4.30" fill="#9ad83c"/><rect x="299.51" y="600.55" width="4.32" height="4.30" fill="#dfe318"/><rect x="303.53" y="600.55" width="60.58" height="4.30" fill="#fde724"/><rect x="363.81" y="600.55" width="4.32" height="4.30" fill="#cde01d"/><rect x="367.83" y="600.55" width="4.32" height="4.30" fill="#38b976"/><rect x="371.85" y="600.55" width="4.32" height="4.30" fill="#22898d"/><rect x="375.87" y="600.55" width="4.32" height="4.30" fill="#31658d"/><rect x="379.89" y="600.55" width="4.32" height="4.30" fill="#3a528b"/><rect x="383.91" y="600.55" width="8.34" height="4.30" fill="#3d4a89"/><rect x="391.94" y="600.55" width="12.36" height="4.30" fill="#404387"/><rect x="255.30" y="604.55" width="4.32" height="4.30" fill="#404387"/><rect x="259.32" y="604.55" width="4.32" height="4.30" fill="#3a528b"/><rect x="263.34" y="604.55" width="4.32" height="4.30" fill="#345e8d"/><rect x="267.36" y="604.55" width="4.32" height="4.30" fill="#277d8e"/><rect x="271.38" y="604.55" width="4.32" height="4.30" fill="#1f968b"/><rect x="275.39" y="604.55" width="4.32" height="4.30" fill="#28ae7f"/><rect x="279.41" y="604.55" width="4.32" height="4.30" fill="#38b976"/><rect x="283.43" y="604.55" width="4.32" height="4.30" fill="#4fc369"/><rect x="287.45" y="604.55" width="4.32" height="4.30" fill="#6bcd59"/><rect x="291.47" y="604.55" width="8.34" height="4.30" fill="#79d151"/><rect x="299.51" y="604.55" width="8.34" height="4.30" fill="#8bd546"/><rect x="307.55" y="604.55" width="4.32" height="4.30" fill="#dfe318"/><rect x="311.56" y="604.55" width="56.56" height="4.30" fill="#fde724"/><rect x="367.83" y="604.55" width="4.32" height="4.30" fill="#79d151"/><rect x="371.85" y="604.55" width="4.32" height="4.30" fill="#1e9b89"/><rect x="375.87" y="604.55" width="4.32" height="4.30" fill="#2c728e"/><rect x="379.89" y="604.55" width="4.32" height="4.30" fill="#37588c"/><rect x="383.91" y="604.55" width="8.34" height="4.30" fill="#3d4a89"/><rect x="391.94" y="604.55" width="12.36" height="4.30" fill="#404387"/><rect x="255.30" y="608.55" width="4.32" height="4.30" fill="#3d4a89"/><rect x="259.32" y="608.55" width="4.32" height="4.30" fill="#37588c"/><rect x="263.34" y="608.55" width="4.32" height="4.30" fill="#2e6b8e"/><rect x="267.36" y="608.55" width="4.32" height="4.30" fill="#22898d"/><rect x="271.38" y="608.55" width="4.32" height="4.30" fill="#1fa286"/><rect x="275.39" y="608.55" width="4.32" height="4.30" fill="#2fb37b"/><rect x="279.41" y="608.55" width="4.32" height="4.30" fill="#44be70"/><rect x="283.43" y="608.55" width="4.32" height="4.30" fill="#5ec961"/><rect x="287.45" y="608.55" width="4.32" height="4.30" fill="#6bcd59"/><rect x="291.47" y="608.55" width="4.32" height="4.30" fill="#79d151"/><rect x="295.49" y="608.55" width="4.32" height="4.30" fill="#6bcd59"/><rect x="299.51" y="608.55" width="4.32" height="4.30" fill="#38b976"/><rect x="303.53" y="608.55" width="4.32" height="4.30" fill="#1e9b89"/><rect x="307.55" y="608.55" width="4.32" height="4.30" fill="#44be70"/><rect x="311.56" y="608.55" width="4.32" height="4.30" fill="#cde01d"/><rect x="315.58" y="608.55" width="52.55" height="4.30" fill="#fde724"/><rect x="367.83" y="608.55" width="4.32" height="4.30" fill="#bdde26"/><rect x="371.85" y="608.55" width="4.32" height="4.30" fill="#22a784"/><rect x="375.87" y="608.55" width="4.32" height="4.30" fill="#277d8e"/><rect x="379.89" y="608.55" width="4.32" height="4.30" fill="#345e8d"/><rect x="383.91" y="608.55" width="4.32" height="4.30" fill="#3a528b"/><rect x="387.92" y="608.55" width="8.34" height="4.30" fill="#3d4a89"/><rect x="395.96" y="608.55" width="8.34" height="4.30" fill="#404387"/><rect x="255.30" y="612.55" width="4.32" height="4.30" fill="#3a528b"/><rect x="259.32" y="612.55" width="4.32" height="4.30" fill="#345e8d"/><rect x="263.34" y="612.55" width="4.32" height="4.30" fill="#29788e"/><rect x="267.36" y="612.55" width="4.32" height="4.30" fill="#1f968b"/><rect x="271.38" y="612.55" width="4.32" height="4.30" fill="#22a784"/><rect x="275.39" y="612.55" width="4.32" height="4.30" fill="#38b976"/><rect x="279.41" y="612.55" width="4.32" height="4.30" fill="#4fc369"/><rect x="283.43" y="612.55" width="4.32" height="4.30" fill="#6bcd59"/><rect x="287.45" y="612.55" width="4.32" height="4.30" fill="#79d151"/><rect x="291.47" y="612.55" width="4.32" height="4.30" fill="#6bcd59"/><rect x="295.49" y="612.55" width="4.32" height="4.30" fill="#38b976"/><rect x="299.51" y="612.55" width="4.32" height="4.30" fill="#20908c"/><rect x="303.53" y="612.55" width="4.32" height="4.30" fill="#31658d"/><rect x="307.55" y="612.55" width="4.32" height="4.30" fill="#277d8e"/><rect x="311.56" y="612.55" width="4.32" height="4.30" fill="#2fb37b"/><rect x="315.58" y="612.55" width="4.32" height="4.30" fill="#bdde26"/><rect x="319.60" y="612.55" width="48.53" height="4.30" fill="#fde724"/><rect x="367.83" y="612.55" width="4.32" height="4.30" fill="#bdde26"/><rect x="371.85" y="612.55" width="4.32" height="4.30" fill="#28ae7f"/><rect x="375.87" y="612.55" width="4.32" height="4.30" fill="#24848d"/><rect x="379.89" y="612.55" width="4.32" height="4.30" fill="#31658d"/><rect x="383.91" y="612.55" width="4.32" height="4.30" fill="#3a528b"/><rect x="387.92" y="612.55" width="8.34" height="4.30" fill="#3d4a89"/><rect x="395.96" y="612.55" width="8.34" height="4.30" fill="#404387"/><rect x="255.30" y="616.54" width="4.32" height="4.30" fill="#37588c"/><rect x="259.32" y="616.54" width="4.32" height="4.30" fill="#31658d"/><rect x="263.34" y="616.54" width="4.32" height="4.30" fill="#24848d"/><rect x="267.36" y="616.54" width="4.32" height="4.30" fill="#1e9b89"/><rect x="271.38" y="616.54" width="4.32" height="4.30" fill="#28ae7f"/><rect x="275.39" y="616.54" width="4.32" height="4.30" fill="#4fc369"/><rect x="279.41" y="616.54" width="4.32" height="4.30" fill="#6bcd59"/><rect x="283.43" y="616.54" width="4.32" height="4.30" fill="#79d151"/><rect x="287.45" y="616.54" width="4.32" height="4.30" fill="#6bcd59"/><rect x="291.47" y="616.54" width="4.32" height="4.30" fill="#38b976"/><rect x="295.49" y="616.54" width="4.32" height="4.30" fill="#20908c"/><rect x="299.51" y="616.54" width="4.32" height="4.30" fill="#31658d"/><rect x="303.53" y="616.54" width="4.32" height="4.30" fill="#433b83"/><rect x="307.55" y="616.54" width="4.32" height="4.30" fill="#3d4a89"/><rect x="311.56" y="616.54" width="4.32" height="4.30" fill="#277d8e"/><rect x="315.58" y="616.54" width="4.32" height="4.30" fill="#38b976"/><rect x="319.60" y="616.54" width="4.32" height="4.30" fill="#dfe318"/><rect x="323.62" y="616.54" width="44.51" height="4.30" fill="#fde724"/><rect x="367.83" y="616.54" width="4.32" height="4.30" fill="#9ad83c"/><rect x="371.85" y="616.54" width="4.32" height="4.30" fill="#28ae7f"/><rect x="375.87" y="616.54" width="4.32" height="4.30" fill="#22898d"/><rect x="379.89" y="616.54" width="4.32" height="4.30" fill="#2e6b8e"/><rect x="383.91" y="616.54" width="4.32" height="4.30" fill="#37588c"/><rect x="387.92" y="616.54" width="12.36" height="4.30" fill="#3d4a89"/><rect x="399.98" y="616.54" width="4.32" height="4.30" fill="#404387"/><rect x="255.30" y="620.54" width="4.32" height="4.30" fill="#345e8d"/><rect x="259.32" y="620.54" width="4.32" height="4.30" fill="#2c728e"/><rect x="263.34" y="620.54" width="4.32" height="4.30" fill="#22898d"/><rect x="267.36" y="620.54" width="4.32" height="4.30" fill="#1fa286"/><rect x="271.38" y="620.54" width="4.32" height="4.30" fill="#38b976"/><rect x="275.39" y="620.54" width="4.32" height="4.30" fill="#6bcd59"/><rect x="279.41" y="620.54" width="4.32" height="4.30" fill="#addc30"/><rect x="283.43" y="620.54" width="4.32" height="4.30" fill="#8bd546"/><rect x="287.45" y="620.54" width="4.32" height="4.30" fill="#44be70"/><rect x="291.47" y="620.54" width="4.32" height="4.30" fill="#20908c"/><rect x="295.49" y="620.54" width="4.32" height="4.30" fill="#31658d"/><rect x="299.51" y="620.54" width="4.32" height="4.30" fill="#45347f"/><rect x="303.53" y="620.54" width="4.32" height="4.30" fill="#481c6e"/><rect x="307.55" y="620.54" width="4.32" height="4.30" fill="#482374"/><rect x="311.56" y="620.54" width="4.32" height="4.30" fill="#3a528b"/><rect x="315.58" y="620.54" width="4.32" height="4.30" fill="#22898d"/><rect x="319.60" y="620.54" width="4.32" height="4.30" fill="#6bcd59"/><rect x="323.62" y="620.54" width="4.32" height="4.30" fill="#dfe318"/><rect x="327.64" y="620.54" width="36.47" height="4.30" fill="#fde724"/><rect x="363.81" y="620.54" width="4.32" height="4.30" fill="#dfe318"/><rect x="367.83" y="620.54" width="4.32" height="4.30" fill="#5ec961"/><rect x="371.85" y="620.54" width="4.32" height="4.30" fill="#1fa286"/><rect x="375.87" y="620.54" width="4.32" height="4.30" fill="#24848d"/><rect x="379.89" y="620.54" width="4.32" height="4.30" fill="#2e6b8e"/><rect x="383.91" y="620.54" width="4.32" height="4.30" fill="#37588c"/><rect x="387.92" y="620.54" width="4.32" height="4.30" fill="#3a528b"/><rect x="391.94" y="620.54" width="8.34" height="4.30" fill="#3d4a89"/><rect x="399.98" y="620.54" width="4.32" height="4.30" fill="#404387"/><rect x="255.30" y="624.54" width="4.32" height="4.30" fill="#2e6b8e"/><rect x="259.32" y="624.54" width="4.32" height="4.30" fill="#277d8e"/><rect x="263.34" y="624.54" width="4.32" height="4.30" fill="#20908c"/><rect x="267.36" y="624.54" width="4.32" height="4.30" fill="#22a784"/><rect x="271.38" y="624.54" width="4.32" height="4.30" fill="#38b976"/><rect x="275.39" y="624.54" width="4.32" height="4.30" fill="#8bd546"/><rect x="279.41" y="624.54" width="4.32" height="4.30" fill="#cde01d"/><rect x="283.43" y="624.54" width="4.32" height="4.30" fill="#9ad83c"/><rect x="287.45" y="624.54" width="4.32" height="4.30" fill="#22a784"/><rect x="291.47" y="624.54" width="4.32" height="4.30" fill="#2c728e"/><rect x="295.49" y="624.54" width="4.32" height="4.30" fill="#404387"/><rect x="299.51" y="624.54" width="4.32" height="4.30" fill="#481c6e"/><rect x="303.53" y="624.54" width="4.32" height="4.30" fill="#46095c"/><rect x="307.55" y="624.54" width="4.32" height="4.30" fill="#471265"/><rect x="311.56" y="624.54" width="4.32" height="4.30" fill="#472c7b"/><rect x="315.58" y="624.54" width="4.32" height="4.30" fill="#31658d"/><rect x="319.60" y="624.54" width="4.32" height="4.30" fill="#22a784"/><rect x="323.62" y="624.54" width="4.32" height="4.30" fill="#9ad83c"/><rect x="327.64" y="624.54" width="4.32" height="4.30" fill="#eee51b"/><rect x="331.66" y="624.54" width="28.43" height="4.30" fill="#fde724"/><rect x="359.79" y="624.54" width="4.32" height="4.30" fill="#dfe318"/><rect x="363.81" y="624.54" width="4.32" height="4.30" fill="#79d151"/><rect x="367.83" y="624.54" width="4.32" height="4.30" fill="#28ae7f"/><rect x="371.85" y="624.54" width="4.32" height="4.30" fill="#22898d"/><rect x="375.87" y="624.54" width="4.32" height="4.30" fill="#2c728e"/><rect x="379.89" y="624.54" width="4.32" height="4.30" fill="#345e8d"/><rect x="383.91" y="624.54" width="4.32" height="4.30" fill="#3a528b"/><rect x="387.92" y="624.54" width="8.34" height="4.30" fill="#3d4a89"/><rect x="395.96" y="624.54" width="8.34" height="4.30" fill="#404387"/><rect x="255.30" y="628.54" width="4.32" height="4.30" fill="#29788e"/><rect x="259.32" y="628.54" width="4.32" height="4.30" fill="#24848d"/><rect x="263.34" y="628.54" width="4.32" height="4.30" fill="#1f968b"/><rect x="267.36" y="628.54" width="4.32" height="4.30" fill="#1fa286"/><rect x="271.38" y="628.54" width="4.32" height="4.30" fill="#38b976"/><rect x="275.39" y="628.54" width="4.32" height="4.30" fill="#8bd546"/><rect x="279.41" y="628.54" width="8.34" height="4.30" fill="#eee51b"/><rect x="287.45" y="628.54" width="4.32" height="4.30" fill="#6bcd59"/><rect x="291.47" y="628.54" width="4.32" height="4.30" fill="#1f968b"/><rect x="295.49" y="628.54" width="4.32" height="4.30" fill="#31658d"/><rect x="299.51" y="628.54" width="4.32" height="4.30" fill="#433b83"/><rect x="303.53" y="628.54" width="4.32" height="4.30" fill="#481c6e"/><rect x="307.55" y="628.54" width="4.32" height="4.30" fill="#482374"/><rect x="311.56" y="628.54" width="4.32" height="4.30" fill="#3a528b"/><rect x="315.58" y="628.54" width="4.32" height="4.30" fill="#22898d"/><rect x="319.60" y="628.54" width="4.32" height="4.30" fill="#6bcd59"/><rect x="323.62" y="628.54" width="4.32" height="4.30" fill="#dfe318"/><rect x="327.64" y="628.54" width="24.41" height="4.30" fill="#fde724"/><rect x="351.75" y="628.54" width="4.32" height="4.30" fill="#dfe318"/><rect x="355.77" y="628.54" width="4.32" height="4.30" fill="#addc30"/><rect x="359.79" y="628.54" width="4.32" height="4.30" fill="#6bcd59"/><rect x="363.81" y="628.54" width="4.32" height="4.30" fill="#2fb37b"/><rect x="367.83" y="628.54" width="4.32" height="4.30" fill="#1f968b"/><rect x="371.85" y="628.54" width="4.32" height="4.30" fill="#2c728e"/><rect x="375.87" y="628.54" width="4.32" height="4.30" fill="#37588c"/><rect x="379.89" y="628.54" width="4.32" height="4.30" fill="#404387"/><rect x="383.91" y="628.54" width="20.39" height="4.30" fill="#433b83"/><rect x="255.30" y="632.53" width="4.32" height="4.30" fill="#277d8e"/><rect x="259.32" y="632.53" width="4.32" height="4.30" fill="#22898d"/><rect x="263.34" y="632.53" width="4.32" height="4.30" fill="#1f968b"/><rect x="267.36" y="632.53" width="4.32" height="4.30" fill="#1fa286"/><rect x="271.38" y="632.53" width="4.32" height="4.30" fill="#2fb37b"/><rect x="275.39" y="632.53" width="4.32" height="4.30" fill="#6bcd59"/><rect x="279.41" y="632.53" width="4.32" height="4.30" fill="#dfe318"/><rect x="283.43" y="632.53" width="4.32" height="4.30" fill="#fde724"/><rect x="287.45" y="632.53" width="4.32" height="4.30" fill="#bdde26"/><rect x="291.47" y="632.53" width="4.32" height="4.30" fill="#44be70"/><rect x="295.49" y="632.53" width="4.32" height="4.30" fill="#1f968b"/><rect x="299.51" y="632.53" width="4.32" height="4.30" fill="#31658d"/><rect x="303.53" y="632.53" width="4.32" height="4.30" fill="#433b83"/><rect x="307.55" y="632.53" width="4.32" height="4.30" fill="#3a528b"/><rect x="311.56" y="632.53" width="4.32" height="4.30" fill="#277d8e"/><rect x="315.58" y="632.53" width="4.32" height="4.30" fill="#2fb37b"/><rect x="319.60" y="632.53" width="4.32" height="4.30" fill="#cde01d"/><rect x="323.62" y="632.53" width="16.38" height="4.30" fill="#fde724"/><rect x="339.70" y="632.53" width="4.32" height="4.30" fill="#dfe318"/><rect x="343.72" y="632.53" width="4.32" height="4.30" fill="#bdde26"/><rect x="347.74" y="632.53" width="4.32" height="4.30" fill="#8bd546"/><rect x="351.75" y="632.53" width="4.32" height="4.30" fill="#5ec961"/><rect x="355.77" y="632.53" width="4.32" height="4.30" fill="#44be70"/><rect x="359.79" y="632.53" width="4.32" height="4.30" fill="#2fb37b"/><rect x="363.81" y="632.53" width="4.32" height="4.30" fill="#1fa286"/><rect x="367.83" y="632.53" width="4.32" height="4.30" fill="#24848d"/><rect x="371.85" y="632.53" width="4.32" height="4.30" fill="#345e8d"/><rect x="375.87" y="632.53" width="4.32" height="4.30" fill="#404387"/><rect x="379.89" y="632.53" width="8.34" height="4.30" fill="#45347f"/><rect x="387.92" y="632.53" width="4.32" height="4.30" fill="#472c7b"/><rect x="391.94" y="632.53" width="12.36" height="4.30" fill="#45347f"/><rect x="255.30" y="636.53" width="4.32" height="4.30" fill="#24848d"/><rect x="259.32" y="636.53" width="4.32" height="4.30" fill="#22898d"/><rect x="263.34" y="636.53" width="4.32" height="4.30" fill="#1f968b"/><rect x="267.36" y="636.53" width="4.32" height="4.30" fill="#1e9b89"/><rect x="271.38" y="636.53" width="4.32" height="4.30" fill="#28ae7f"/><rect x="275.39" y="636.53" width="4.32" height="4.30" fill="#44be70"/><rect x="279.41" y="636.53" width="4.32" height="4.30" fill="#9ad83c"/><rect x="283.43" y="636.53" width="4.32" height="4.30" fill="#cde01d"/><rect x="287.45" y="636.53" width="4.32" height="4.30" fill="#bdde26"/><rect x="291.47" y="636.53" width="4.32" height="4.30" fill="#79d151"/><rect x="295.49" y="636.53" width="4.32" height="4.30" fill="#38b976"/><rect x="299.51" y="636.53" width="4.32" height="4.30" fill="#20908c"/><rect x="303.53" y="636.53" width="4.32" height="4.30" fill="#31658d"/><rect x="307.55" y="636.53" width="4.32" height="4.30" fill="#277d8e"/><rect x="311.56" y="636.53" width="4.32" height="4.30" fill="#22a784"/><rect x="315.58" y="636.53" width="4.32" height="4.30" fill="#5ec961"/><rect x="319.60" y="636.53" width="4.32" height="4.30" fill="#bdde26"/><rect x="323.62" y="636.53" width="4.32" height="4.30" fill="#eee51b"/><rect x="327.64" y="636.53" width="4.32" height="4.30" fill="#dfe318"/><rect x="331.66" y="636.53" width="4.32" height="4.30" fill="#bdde26"/><rect x="335.68" y="636.53" width="4.32" height="4.30" fill="#8bd546"/><rect x="339.70" y="636.53" width="4.32" height="4.30" fill="#6bcd59"/><rect x="343.72" y="636.53" width="4.32" height="4.30" fill="#4fc369"/><rect x="347.74" y="636.53" width="4.32" height="4.30" fill="#38b976"/><rect x="351.75" y="636.53" width="4.32" height="4.30" fill="#2fb37b"/><rect x="355.77" y="636.53" width="4.32" height="4.30" fill="#28ae7f"/><rect x="359.79" y="636.53" width="4.32" height="4.30" fill="#1fa286"/><rect x="363.81" y="636.53" width="4.32" height="4.30" fill="#1f968b"/><rect x="367.83" y="636.53" width="4.32" height="4.30" fill="#29788e"/><rect x="371.85" y="636.53" width="4.32" height="4.30" fill="#3a528b"/><rect x="375.87" y="636.53" width="4.32" height="4.30" fill="#433b83"/><rect x="379.89" y="636.53" width="24.41" height="4.30" fill="#472c7b"/><rect x="255.30" y="640.53" width="4.32" height="4.30" fill="#277d8e"/><rect x="259.32" y="640.53" width="4.32" height="4.30" fill="#22898d"/><rect x="263.34" y="640.53" width="4.32" height="4.30" fill="#20908c"/><rect x="267.36" y="640.53" width="4.32" height="4.30" fill="#1e9b89"/><rect x="271.38" y="640.53" width="4.32" height="4.30" fill="#1fa286"/><rect x="275.39" y="640.53" width="4.32" height="4.30" fill="#2fb37b"/><rect x="279.41" y="640.53" width="4.32" height="4.30" fill="#4fc369"/><rect x="283.43" y="640.53" width="4.32" height="4.30" fill="#79d151"/><rect x="287.45" y="640.53" width="8.34" height="4.30" fill="#8bd546"/><rect x="295.49" y="640.53" width="4.32" height="4.30" fill="#6bcd59"/><rect x="299.51" y="640.53" width="4.32" height="4.30" fill="#2fb37b"/><rect x="303.53" y="640.53" width="4.32" height="4.30" fill="#20908c"/><rect x="307.55" y="640.53" width="4.32" height="4.30" fill="#1fa286"/><rect x="311.56" y="640.53" width="4.32" height="4.30" fill="#44be70"/><rect x="315.58" y="640.53" width="4.32" height="4.30" fill="#6bcd59"/><rect x="319.60" y="640.53" width="8.34" height="4.30" fill="#79d151"/><rect x="327.64" y="640.53" width="4.32" height="4.30" fill="#6bcd59"/><rect x="331.66" y="640.53" width="4.32" height="4.30" fill="#4fc369"/><rect x="335.68" y="640.53" width="4.32" height="4.30" fill="#44be70"/><rect x="339.70" y="640.53" width="4.32" height="4.30" fill="#2fb37b"/><rect x="343.72" y="640.53" width="4.32" height="4.30" fill="#28ae7f"/><rect x="347.74" y="640.53" width="8.34" height="4.30" fill="#22a784"/><rect x="355.77" y="640.53" width="4.32" height="4.30" fill="#1fa286"/><rect x="359.79" y="640.53" width="4.32" height="4.30" fill="#1e9b89"/><rect x="363.81" y="640.53" width="4.32" height="4.30" fill="#22898d"/><rect x="367.83" y="640.53" width="4.32" height="4.30" fill="#2c728e"/><rect x="371.85" y="640.53" width="4.32" height="4.30" fill="#3d4a89"/><rect x="375.87" y="640.53" width="4.32" height="4.30" fill="#45347f"/><rect x="379.89" y="640.53" width="4.32" height="4.30" fill="#472c7b"/><rect x="383.91" y="640.53" width="20.39" height="4.30" fill="#482374"/><rect x="255.30" y="644.52" width="4.32" height="4.30" fill="#2c728e"/><rect x="259.32" y="644.52" width="4.32" height="4.30" fill="#277d8e"/><rect x="263.34" y="644.52" width="4.32" height="4.30" fill="#20908c"/><rect x="267.36" y="644.52" width="4.32" height="4.30" fill="#1f968b"/><rect x="271.38" y="644.52" width="4.32" height="4.30" fill="#1fa286"/><rect x="275.39" y="644.52" width="4.32" height="4.30" fill="#22a784"/><rect x="279.41" y="644.52" width="4.32" height="4.30" fill="#2fb37b"/><rect x="283.43" y="644.52" width="4.32" height="4.30" fill="#44be70"/><rect x="287.45" y="644.52" width="4.32" height="4.30" fill="#5ec961"/><rect x="291.47" y="644.52" width="8.34" height="4.30" fill="#6bcd59"/><rect x="299.51" y="644.52" width="4.32" height="4.30" fill="#4fc369"/><rect x="303.53" y="644.52" width="4.32" height="4.30" fill="#2fb37b"/><rect x="307.55" y="644.52" width="4.32" height="4.30" fill="#38b976"/><rect x="311.56" y="644.52" width="4.32" height="4.30" fill="#4fc369"/><rect x="315.58" y="644.52" width="4.32" height="4.30" fill="#5ec961"/><rect x="319.60" y="644.52" width="4.32" height="4.30" fill="#4fc369"/><rect x="323.62" y="644.52" width="4.32" height="4.30" fill="#44be70"/><rect x="327.64" y="644.52" width="4.32" height="4.30" fill="#38b976"/><rect x="331.66" y="644.52" width="4.32" height="4.30" fill="#2fb37b"/><rect x="335.68" y="644.52" width="4.32" height="4.30" fill="#28ae7f"/><rect x="339.70" y="644.52" width="4.32" height="4.30" fill="#22a784"/><rect x="343.72" y="644.52" width="8.34" height="4.30" fill="#1fa286"/><rect x="351.75" y="644.52" width="8.34" height="4.30" fill="#1e9b89"/><rect x="359.79" y="644.52" width="4.32" height="4.30" fill="#1f968b"/><rect x="363.81" y="644.52" width="4.32" height="4.30" fill="#24848d"/><rect x="367.83" y="644.52" width="4.32" height="4.30" fill="#31658d"/><rect x="371.85" y="644.52" width="4.32" height="4.30" fill="#404387"/><rect x="375.87" y="644.52" width="4.32" height="4.30" fill="#472c7b"/><rect x="379.89" y="644.52" width="24.41" height="4.30" fill="#482374"/><rect x="255.30" y="648.52" width="4.32" height="4.30" fill="#2e6b8e"/><rect x="259.32" y="648.52" width="4.32" height="4.30" fill="#29788e"/><rect x="263.34" y="648.52" width="4.32" height="4.30" fill="#22898d"/><rect x="267.36" y="648.52" width="4.32" height="4.30" fill="#20908c"/><rect x="271.38" y="648.52" width="4.32" height="4.30" fill="#1e9b89"/><rect x="275.39" y="648.52" width="4.32" height="4.30" fill="#1fa286"/><rect x="279.41" y="648.52" width="4.32" height="4.30" fill="#22a784"/><rect x="283.43" y="648.52" width="4.32" height="4.30" fill="#2fb37b"/><rect x="287.45" y="648.52" width="4.32" height="4.30" fill="#38b976"/><rect x="291.47" y="648.52" width="4.32" height="4.30" fill="#44be70"/><rect x="295.49" y="648.52" width="8.34" height="4.30" fill="#4fc369"/><rect x="303.53" y="648.52" width="4.32" height="4.30" fill="#38b976"/><rect x="307.55" y="648.52" width="8.34" height="4.30" fill="#44be70"/><rect x="315.58" y="648.52" width="4.32" height="4.30" fill="#38b976"/><rect x="319.60" y="648.52" width="4.32" height="4.30" fill="#2fb37b"/><rect x="323.62" y="648.52" width="4.32" height="4.30" fill="#28ae7f"/><rect x="327.64" y="648.52" width="8.34" height="4.30" fill="#22a784"/><rect x="335.68" y="648.52" width="4.32" height="4.30" fill="#1fa286"/><rect x="339.70" y="648.52" width="8.34" height="4.30" fill="#1e9b89"/><rect x="347.74" y="648.52" width="12.36" height="4.30" fill="#1f968b"/><rect x="359.79" y="648.52" width="4.32" height="4.30" fill="#20908c"/><rect x="363.81" y="648.52" width="4.32" height="4.30" fill="#277d8e"/><rect x="367.83" y="648.52" width="4.32" height="4.30" fill="#345e8d"/><rect x="371.85" y="648.52" width="4.32" height="4.30" fill="#433b83"/><rect x="375.87" y="648.52" width="8.34" height="4.30" fill="#482374"/><rect x="383.91" y="648.52" width="16.38" height="4.30" fill="#481c6e"/><rect x="399.98" y="648.52" width="4.32" height="4.30" fill="#482374"/><rect x="255.30" y="652.52" width="4.32" height="4.30" fill="#31658d"/><rect x="259.32" y="652.52" width="4.32" height="4.30" fill="#2c728e"/><rect x="263.34" y="652.52" width="4.32" height="4.30" fill="#277d8e"/><rect x="267.36" y="652.52" width="4.32" height="4.30" fill="#20908c"/><rect x="271.38" y="652.52" width="4.32" height="4.30" fill="#1f968b"/><rect x="275.39" y="652.52" width="4.32" height="4.30" fill="#1e9b89"/><rect x="279.41" y="652.52" width="4.32" height="4.30" fill="#1fa286"/><rect x="283.43" y="652.52" width="4.32" height="4.30" fill="#22a784"/><rect x="287.45" y="652.52" width="4.32" height="4.30" fill="#28ae7f"/><rect x="291.47" y="652.52" width="4.32" height="4.30" fill="#2fb37b"/><rect x="295.49" y="652.52" width="8.34" height="4.30" fill="#38b976"/><rect x="303.53" y="652.52" width="12.36" height="4.30" fill="#2fb37b"/><rect x="315.58" y="652.52" width="4.32" height="4.30" fill="#28ae7f"/><rect x="319.60" y="652.52" width="4.32" height="4.30" fill="#22a784"/><rect x="323.62" y="652.52" width="8.34" height="4.30" fill="#1fa286"/><rect x="331.66" y="652.52" width="8.34" height="4.30" fill="#1e9b89"/><rect x="339.70" y="652.52" width="12.36" height="4.30" fill="#1f968b"/><rect x="351.75" y="652.52" width="8.34" height="4.30" fill="#20908c"/><rect x="359.79" y="652.52" width="4.32" height="4.30" fill="#22898d"/><rect x="363.81" y="652.52" width="4.32" height="4.30" fill="#29788e"/><rect x="367.83" y="652.52" width="4.32" height="4.30" fill="#37588c"/><rect x="371.85" y="652.52" width="4.32" height="4.30" fill="#45347f"/><rect x="375.87" y="652.52" width="4.32" height="4.30" fill="#482374"/><rect x="379.89" y="652.52" width="24.41" height="4.30" fill="#481c6e"/><rect x="255.30" y="656.52" width="4.32" height="4.30" fill="#31658d"/><rect x="259.32" y="656.52" width="4.32" height="4.30" fill="#2e6b8e"/><rect x="263.34" y="656.52" width="4.32" height="4.30" fill="#29788e"/><rect x="267.36" y="656.52" width="4.32" height="4.30" fill="#22898d"/><rect x="271.38" y="656.52" width="4.32" height="4.30" fill="#20908c"/><rect x="275.39" y="656.52" width="4.32" height="4.30" fill="#1f968b"/><rect x="279.41" y="656.52" width="8.34" height="4.30" fill="#1e9b89"/><rect x="287.45" y="656.52" width="4.32" height="4.30" fill="#1fa286"/><rect x="291.47" y="656.52" width="24.41" height="4.30" fill="#22a784"/><rect x="315.58" y="656.52" width="4.32" height="4.30" fill="#1fa286"/><rect x="319.60" y="656.52" width="8.34" height="4.30" fill="#1e9b89"/><rect x="327.64" y="656.52" width="16.38" height="4.30" fill="#1f968b"/><rect x="343.72" y="656.52" width="16.38" height="4.30" fill="#20908c"/><rect x="359.79" y="656.52" width="4.32" height="4.30" fill="#24848d"/><rect x="363.81" y="656.52" width="4.32" height="4.30" fill="#2c728e"/><rect x="367.83" y="656.52" width="4.32" height="4.30" fill="#3d4a89"/><rect x="371.85" y="656.52" width="4.32" height="4.30" fill="#472c7b"/><rect x="375.87" y="656.52" width="8.34" height="4.30" fill="#481c6e"/><rect x="383.91" y="656.52" width="16.38" height="4.30" fill="#471265"/><rect x="399.98" y="656.52" width="4.32" height="4.30" fill="#481c6e"/><rect x="255.30" y="660.51" width="4.32" height="4.30" fill="#345e8d"/><rect x="259.32" y="660.51" width="4.32" height="4.30" fill="#31658d"/><rect x="263.34" y="660.51" width="4.32" height="4.30" fill="#2c728e"/><rect x="267.36" y="660.51" width="4.32" height="4.30" fill="#277d8e"/><rect x="271.38" y="660.51" width="4.32" height="4.30" fill="#22898d"/><rect x="275.39" y="660.51" width="4.32" height="4.30" fill="#20908c"/><rect x="279.41" y="660.51" width="8.34" height="4.30" fill="#1f968b"/><rect x="287.45" y="660.51" width="12.36" height="4.30" fill="#1e9b89"/><rect x="299.51" y="660.51" width="8.34" height="4.30" fill="#1fa286"/><rect x="307.55" y="660.51" width="12.36" height="4.30" fill="#1e9b89"/><rect x="319.60" y="660.51" width="12.36" height="4.30" fill="#1f968b"/><rect x="331.66" y="660.51" width="24.41" height="4.30" fill="#20908c"/><rect x="355.77" y="660.51" width="4.32" height="4.30" fill="#22898d"/><rect x="359.79" y="660.51" width="4.32" height="4.30" fill="#277d8e"/><rect x="363.81" y="660.51" width="4.32" height="4.30" fill="#31658d"/><rect x="367.83" y="660.51" width="4.32" height="4.30" fill="#404387"/><rect x="371.85" y="660.51" width="4.32" height="4.30" fill="#482374"/><rect x="375.87" y="660.51" width="4.32" height="4.30" fill="#481c6e"/><rect x="379.89" y="660.51" width="8.34" height="4.30" fill="#471265"/><rect x="387.92" y="660.51" width="4.32" height="4.30" fill="#46095c"/><rect x="391.94" y="660.51" width="12.36" height="4.30" fill="#471265"/><rect x="255.30" y="664.51" width="4.32" height="4.30" fill="#345e8d"/><rect x="259.32" y="664.51" width="4.32" height="4.30" fill="#31658d"/><rect x="263.34" y="664.51" width="4.32" height="4.30" fill="#2e6b8e"/><rect x="267.36" y="664.51" width="4.32" height="4.30" fill="#29788e"/><rect x="271.38" y="664.51" width="4.32" height="4.30" fill="#22898d"/><rect x="275.39" y="664.51" width="8.34" height="4.30" fill="#20908c"/><rect x="283.43" y="664.51" width="40.49" height="4.30" fill="#1f968b"/><rect x="323.62" y="664.51" width="16.38" height="4.30" fill="#20908c"/><rect x="339.70" y="664.51" width="4.32" height="4.30" fill="#1f968b"/><rect x="343.72" y="664.51" width="8.34" height="4.30" fill="#1e9b89"/><rect x="351.75" y="664.51" width="4.32" height="4.30" fill="#1f968b"/><rect x="355.77" y="664.51" width="4.32" height="4.30" fill="#22898d"/><rect x="359.79" y="664.51" width="4.32" height="4.30" fill="#29788e"/><rect x="363.81" y="664.51" width="4.32" height="4.30" fill="#37588c"/><rect x="367.83" y="664.51" width="4.32" height="4.30" fill="#433b83"/><rect x="371.85" y="664.51" width="4.32" height="4.30" fill="#482374"/><rect x="375.87" y="664.51" width="8.34" height="4.30" fill="#471265"/><rect x="383.91" y="664.51" width="16.38" height="4.30" fill="#46095c"/><rect x="399.98" y="664.51" width="4.32" height="4.30" fill="#471265"/><rect x="255.30" y="668.51" width="8.34" height="4.30" fill="#345e8d"/><rect x="263.34" y="668.51" width="4.32" height="4.30" fill="#31658d"/><rect x="267.36" y="668.51" width="4.32" height="4.30" fill="#2c728e"/><rect x="271.38" y="668.51" width="4.32" height="4.30" fill="#24848d"/><rect x="275.39" y="668.51" width="4.32" height="4.30" fill="#22898d"/><rect x="279.41" y="668.51" width="16.38" height="4.30" fill="#20908c"/><rect x="295.49" y="668.51" width="16.38" height="4.30" fill="#1f968b"/><rect x="311.56" y="668.51" width="24.41" height="4.30" fill="#20908c"/><rect x="335.68" y="668.51" width="4.32" height="4.30" fill="#1f968b"/><rect x="339.70" y="668.51" width="4.32" height="4.30" fill="#1fa286"/><rect x="343.72" y="668.51" width="4.32" height="4.30" fill="#44be70"/><rect x="347.74" y="668.51" width="4.32" height="4.30" fill="#5ec961"/><rect x="351.75" y="668.51" width="4.32" height="4.30" fill="#44be70"/><rect x="355.77" y="668.51" width="4.32" height="4.30" fill="#1fa286"/><rect x="359.79" y="668.51" width="4.32" height="4.30" fill="#29788e"/><rect x="363.81" y="668.51" width="4.32" height="4.30" fill="#37588c"/><rect x="367.83" y="668.51" width="4.32" height="4.30" fill="#45347f"/><rect x="371.85" y="668.51" width="4.32" height="4.30" fill="#482374"/><rect x="375.87" y="668.51" width="8.34" height="4.30" fill="#471265"/><rect x="383.91" y="668.51" width="16.38" height="4.30" fill="#46095c"/><rect x="399.98" y="668.51" width="4.32" height="4.30" fill="#471265"/><rect x="255.30" y="672.51" width="8.34" height="4.30" fill="#345e8d"/><rect x="263.34" y="672.51" width="4.32" height="4.30" fill="#31658d"/><rect x="267.36" y="672.51" width="4.32" height="4.30" fill="#2e6b8e"/><rect x="271.38" y="672.51" width="4.32" height="4.30" fill="#277d8e"/><rect x="275.39" y="672.51" width="4.32" height="4.30" fill="#22898d"/><rect x="279.41" y="672.51" width="56.56" height="4.30" fill="#20908c"/><rect x="335.68" y="672.51" width="4.32" height="4.30" fill="#1e9b89"/><rect x="339.70" y="672.51" width="4.32" height="4.30" fill="#44be70"/><rect x="343.72" y="672.51" width="4.32" height="4.30" fill="#cde01d"/><rect x="347.74" y="672.51" width="4.32" height="4.30" fill="#fde724"/><rect x="351.75" y="672.51" width="4.32" height="4.30" fill="#eee51b"/><rect x="355.77" y="672.51" width="4.32" height="4.30" fill="#79d151"/><rect x="359.79" y="672.51" width="4.32" height="4.30" fill="#20908c"/><rect x="363.81" y="672.51" width="4.32" height="4.30" fill="#37588c"/><rect x="367.83" y="672.51" width="4.32" height="4.30" fill="#45347f"/><rect x="371.85" y="672.51" width="4.32" height="4.30" fill="#481c6e"/><rect x="375.87" y="672.51" width="8.34" height="4.30" fill="#471265"/><rect x="383.91" y="672.51" width="16.38" height="4.30" fill="#46095c"/><rect x="399.98" y="672.51" width="4.32" height="4.30" fill="#471265"/><rect x="255.30" y="676.50" width="12.36" height="4.30" fill="#345e8d"/><rect x="267.36" y="676.50" width="4.32" height="4.30" fill="#2e6b8e"/><rect x="271.38" y="676.50" width="4.32" height="4.30" fill="#29788e"/><rect x="275.39" y="676.50" width="4.32" height="4.30" fill="#22898d"/><rect x="279.41" y="676.50" width="56.56" height="4.30" fill="#20908c"/><rect x="335.68" y="676.50" width="4.32" height="4.30" fill="#1e9b89"/><rect x="339.70" y="676.50" width="4.32" height="4.30" fill="#6bcd59"/><rect x="343.72" y="676.50" width="12.36" height="4.30" fill="#fde724"/><rect x="355.77" y="676.50" width="4.32" height="4.30" fill="#dfe318"/><rect x="359.79" y="676.50" width="4.32" height="4.30" fill="#22a784"/><rect x="363.81" y="676.50" width="4.32" height="4.30" fill="#345e8d"/><rect x="367.83" y="676.50" width="4.32" height="4.30" fill="#45347f"/><rect x="371.85" y="676.50" width="4.32" height="4.30" fill="#482374"/><rect x="375.87" y="676.50" width="4.32" height="4.30" fill="#481c6e"/><rect x="379.89" y="676.50" width="8.34" height="4.30" fill="#471265"/><rect x="387.92" y="676.50" width="8.34" height="4.30" fill="#46095c"/><rect x="395.96" y="676.50" width="8.34" height="4.30" fill="#471265"/></g>
<rect x="280.08" y="557.48" width="98.04" height="98.04" fill="none" stroke="#ff0000" stroke-width="1.5"/>
<path d="M321.10 606.50h-29M337.30 606.50h29M329.10 597.00v-28M329.10 614.50v29" stroke="#ff0000" stroke-width="1.2" fill="none"/>
<text class="s" x="329.10" y="545.80" font-size="9.72" fill="#ff0000" stroke="#ff0000" text-anchor="middle">N</text>
<text class="s" x="263.10" y="610.00" font-size="9.72" fill="#ff0000" stroke="#ff0000">E</text>
<rect x="255.30" y="532.60" width="148.70" height="147.90" fill="none" stroke="#222" stroke-width="1.15"/>
<text class="s" x="263.74" y="696.20" font-size="10.00" stroke="#000" text-anchor="middle">−4</text>
<text class="s" x="247.30" y="676.46" font-size="10.00" stroke="#000" text-anchor="end">−4</text>
<text class="s" x="296.42" y="696.20" font-size="10.00" stroke="#000" text-anchor="middle">−2</text>
<text class="s" x="247.30" y="643.78" font-size="10.00" stroke="#000" text-anchor="end">−2</text>
<text class="s" x="329.10" y="696.20" font-size="10.00" stroke="#000" text-anchor="middle">0</text>
<text class="s" x="247.30" y="611.10" font-size="10.00" stroke="#000" text-anchor="end">0</text>
<text class="s" x="361.78" y="696.20" font-size="10.00" stroke="#000" text-anchor="middle">2</text>
<text class="s" x="247.30" y="578.42" font-size="10.00" stroke="#000" text-anchor="end">2</text>
<text class="s" x="394.46" y="696.20" font-size="10.00" stroke="#000" text-anchor="middle">4</text>
<text class="s" x="247.30" y="545.74" font-size="10.00" stroke="#000" text-anchor="end">4</text>
<path d="M263.74 680.50v3.5M255.30 671.86h-3.5M296.42 680.50v3.5M255.30 639.18h-3.5M329.10 680.50v3.5M255.30 606.50h-3.5M361.78 680.50v3.5M255.30 573.82h-3.5M394.46 680.50v3.5M255.30 541.14h-3.5" stroke="#000" stroke-width="0.9" fill="none"/>
<text class="s" x="329.30" y="525.70" font-size="13.00" stroke="#000" text-anchor="middle">Lineflux Map</text>
<text class="s" x="329.30" y="706.50" font-size="10.90" stroke="#000" text-anchor="middle">s/b: 7.01 +/- 0.107</text>
<g clip-path="url(#cp3)"><rect x="440.50" y="532.60" width="148.00" height="147.90" fill="#fcfcfc"/><circle cx="0" cy="0" r="44" fill="url(#gal2)" transform="translate(523.8,604.3) scale(1.06,1)"/></g>
<rect x="465.58" y="557.48" width="98.04" height="98.04" fill="none" stroke="#ff0000" stroke-width="1.5"/>
<ellipse cx="523.4" cy="604.2" rx="52.3" ry="50.9" fill="none" stroke="#ffd700" stroke-width="1.4"/>
<path d="M507.30 606.50h-30M521.90 606.50h30M514.60 599.20v-30M514.60 613.80v30" stroke="#ff0000" stroke-width="1.2" fill="none"/>
<rect x="516.4" y="597.8" width="13.4" height="13.4" fill="none" stroke="#0000ff" stroke-width="1.3"/>
<text class="s" x="514.60" y="545.80" font-size="9.72" fill="#ff0000" stroke="#ff0000" text-anchor="middle">N</text>
<text class="s" x="448.40" y="610.00" font-size="9.72" fill="#ff0000" stroke="#ff0000">E</text>
<rect x="440.50" y="532.60" width="148.00" height="147.90" fill="none" stroke="#222" stroke-width="1.15"/>
<text class="s" x="449.24" y="696.20" font-size="10.00" stroke="#000" text-anchor="middle">−4</text>
<text class="s" x="432.50" y="676.46" font-size="10.00" stroke="#000" text-anchor="end">−4</text>
<text class="s" x="481.92" y="696.20" font-size="10.00" stroke="#000" text-anchor="middle">−2</text>
<text class="s" x="432.50" y="643.78" font-size="10.00" stroke="#000" text-anchor="end">−2</text>
<text class="s" x="514.60" y="696.20" font-size="10.00" stroke="#000" text-anchor="middle">0</text>
<text class="s" x="432.50" y="611.10" font-size="10.00" stroke="#000" text-anchor="end">0</text>
<text class="s" x="547.28" y="696.20" font-size="10.00" stroke="#000" text-anchor="middle">2</text>
<text class="s" x="432.50" y="578.42" font-size="10.00" stroke="#000" text-anchor="end">2</text>
<text class="s" x="579.96" y="696.20" font-size="10.00" stroke="#000" text-anchor="middle">4</text>
<text class="s" x="432.50" y="545.74" font-size="10.00" stroke="#000" text-anchor="end">4</text>
<path d="M449.24 680.50v3.5M440.50 671.86h-3.5M481.92 680.50v3.5M440.50 639.18h-3.5M514.60 680.50v3.5M440.50 606.50h-3.5M547.28 680.50v3.5M440.50 573.82h-3.5M579.96 680.50v3.5M440.50 541.14h-3.5" stroke="#000" stroke-width="0.9" fill="none"/>
<text class="s" x="514.60" y="525.70" font-size="13.00" stroke="#000" text-anchor="middle">HSC(26.2) r</text>
<text class="s" x="514.60" y="706.90" font-size="10.90" stroke="#000" text-anchor="middle" xml:space="preserve">m:18.7  re:3.1"  s:0.6"</text>
<text class="s" x="514.60" y="718.70" font-size="10.90" stroke="#000" text-anchor="middle">EWr: 1, PLAE: 0.007</text>
</svg>
</body></html>
